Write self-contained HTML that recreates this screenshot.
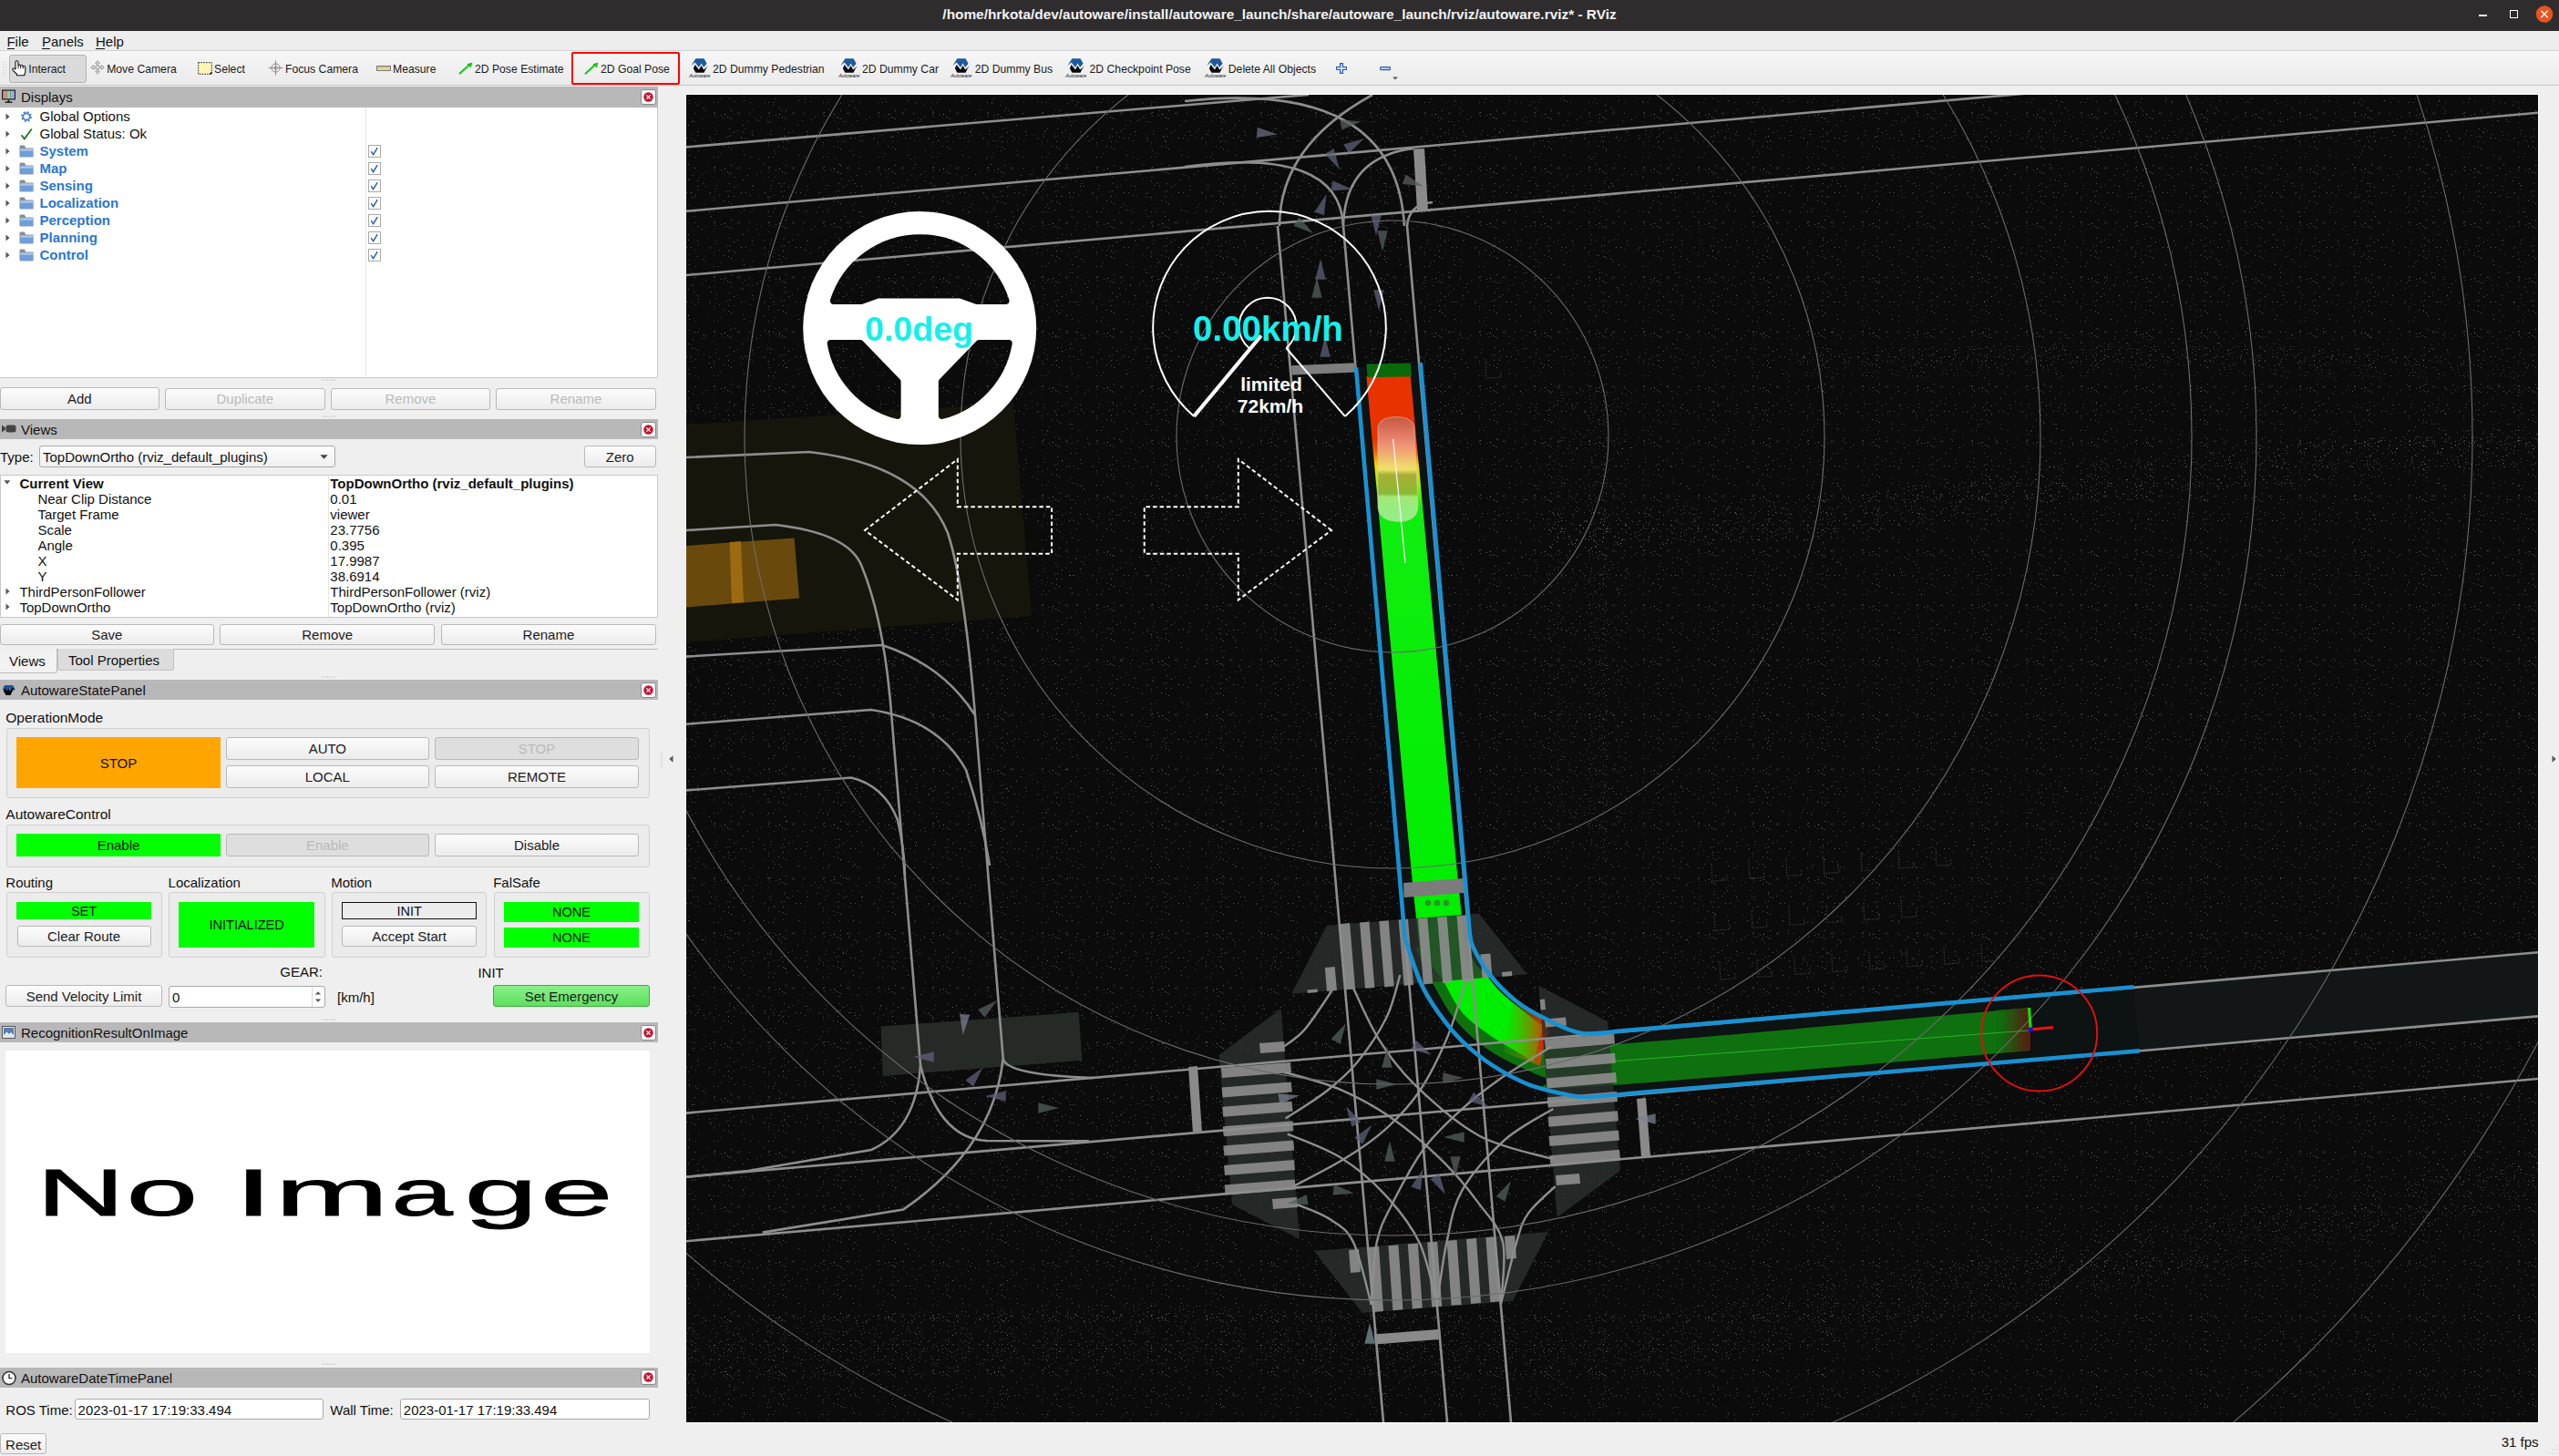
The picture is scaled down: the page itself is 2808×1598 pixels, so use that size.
<!DOCTYPE html>
<html><head><meta charset="utf-8"><title>RViz</title>
<style>
html,body{margin:0;padding:0;}
body{width:2808px;height:1598px;position:relative;overflow:hidden;background:#efefef;font-family:"Liberation Sans",sans-serif;}
body>div{position:absolute;}
.t{position:absolute;white-space:nowrap;}
</style></head><body>
<div style="left:752px;top:103px;width:2034px;height:1459px;background:#fff;"></div>
<svg style="position:absolute;left:753px;top:104px" width="2032" height="1457" viewBox="753 104 2032 1457"><rect x="753" y="104" width="2032" height="1457" fill="#0b0b0b"/><defs><pattern id="pc" width="60" height="60" patternUnits="userSpaceOnUse"><rect x="20" y="9" width="1" height="1" fill="#a8a8a8" fill-opacity="0.37"/><rect x="3" y="4" width="1" height="1" fill="#a8a8a8" fill-opacity="0.50"/><rect x="6" y="23" width="1" height="1" fill="#a8a8a8" fill-opacity="0.42"/><rect x="58" y="32" width="1" height="1" fill="#a8a8a8" fill-opacity="0.31"/><rect x="5" y="27" width="1" height="1" fill="#a8a8a8" fill-opacity="0.38"/><rect x="15" y="5" width="1" height="1" fill="#a8a8a8" fill-opacity="0.42"/><rect x="3" y="52" width="1" height="1" fill="#a8a8a8" fill-opacity="0.42"/><rect x="14" y="40" width="1" height="1" fill="#a8a8a8" fill-opacity="0.44"/><rect x="3" y="36" width="1" height="1" fill="#a8a8a8" fill-opacity="0.43"/><rect x="3" y="14" width="1" height="1" fill="#a8a8a8" fill-opacity="0.26"/><rect x="54" y="8" width="1" height="1" fill="#a8a8a8" fill-opacity="0.34"/><rect x="9" y="34" width="1" height="1" fill="#a8a8a8" fill-opacity="0.29"/><rect x="19" y="35" width="1" height="1" fill="#a8a8a8" fill-opacity="0.49"/><rect x="11" y="6" width="1" height="1" fill="#a8a8a8" fill-opacity="0.42"/><rect x="40" y="12" width="1" height="1" fill="#a8a8a8" fill-opacity="0.36"/><rect x="35" y="45" width="1" height="1" fill="#a8a8a8" fill-opacity="0.27"/><rect x="3" y="39" width="1" height="1" fill="#a8a8a8" fill-opacity="0.31"/><rect x="43" y="34" width="1" height="1" fill="#a8a8a8" fill-opacity="0.38"/><rect x="20" y="29" width="1" height="1" fill="#a8a8a8" fill-opacity="0.43"/><rect x="29" y="23" width="1" height="1" fill="#a8a8a8" fill-opacity="0.34"/><rect x="50" y="11" width="1" height="1" fill="#a8a8a8" fill-opacity="0.46"/><rect x="15" y="5" width="1" height="1" fill="#a8a8a8" fill-opacity="0.42"/><rect x="33" y="31" width="1" height="1" fill="#a8a8a8" fill-opacity="0.51"/><rect x="46" y="28" width="1" height="1" fill="#a8a8a8" fill-opacity="0.34"/><rect x="4" y="7" width="1" height="1" fill="#a8a8a8" fill-opacity="0.40"/><rect x="10" y="48" width="1" height="1" fill="#a8a8a8" fill-opacity="0.35"/><rect x="59" y="31" width="1" height="1" fill="#a8a8a8" fill-opacity="0.38"/><rect x="42" y="4" width="1" height="1" fill="#a8a8a8" fill-opacity="0.48"/><rect x="36" y="50" width="1" height="1" fill="#a8a8a8" fill-opacity="0.51"/><rect x="20" y="21" width="1" height="1" fill="#a8a8a8" fill-opacity="0.46"/><rect x="38" y="31" width="1" height="1" fill="#a8a8a8" fill-opacity="0.42"/><rect x="29" y="4" width="1" height="1" fill="#a8a8a8" fill-opacity="0.50"/><rect x="17" y="30" width="1" height="1" fill="#a8a8a8" fill-opacity="0.46"/><rect x="4" y="3" width="1" height="1" fill="#a8a8a8" fill-opacity="0.47"/><rect x="19" y="41" width="1" height="1" fill="#a8a8a8" fill-opacity="0.42"/><rect x="43" y="52" width="1" height="1" fill="#a8a8a8" fill-opacity="0.38"/><rect x="45" y="24" width="1" height="1" fill="#a8a8a8" fill-opacity="0.52"/><rect x="22" y="1" width="1" height="1" fill="#a8a8a8" fill-opacity="0.53"/><rect x="22" y="10" width="1" height="1" fill="#a8a8a8" fill-opacity="0.43"/><rect x="31" y="3" width="1" height="1" fill="#a8a8a8" fill-opacity="0.32"/><rect x="18" y="8" width="1" height="1" fill="#a8a8a8" fill-opacity="0.47"/><rect x="25" y="25" width="1" height="1" fill="#a8a8a8" fill-opacity="0.53"/><rect x="31" y="5" width="1" height="1" fill="#a8a8a8" fill-opacity="0.30"/><rect x="25" y="35" width="1" height="1" fill="#a8a8a8" fill-opacity="0.33"/><rect x="8" y="52" width="1" height="1" fill="#a8a8a8" fill-opacity="0.38"/><rect x="35" y="17" width="1" height="1" fill="#a8a8a8" fill-opacity="0.46"/><rect x="22" y="43" width="1" height="1" fill="#a8a8a8" fill-opacity="0.52"/><rect x="14" y="9" width="1" height="1" fill="#a8a8a8" fill-opacity="0.27"/></pattern><pattern id="pc2" width="83" height="83" patternUnits="userSpaceOnUse"><rect x="15" y="71" width="1" height="1" fill="#a8a8a8" fill-opacity="0.22"/><rect x="66" y="67" width="1" height="1" fill="#a8a8a8" fill-opacity="0.37"/><rect x="13" y="71" width="1" height="1" fill="#a8a8a8" fill-opacity="0.22"/><rect x="24" y="35" width="1" height="1" fill="#a8a8a8" fill-opacity="0.21"/><rect x="12" y="64" width="1" height="1" fill="#a8a8a8" fill-opacity="0.34"/><rect x="3" y="8" width="1" height="1" fill="#a8a8a8" fill-opacity="0.33"/><rect x="78" y="64" width="1" height="1" fill="#a8a8a8" fill-opacity="0.38"/><rect x="25" y="35" width="1" height="1" fill="#a8a8a8" fill-opacity="0.34"/><rect x="68" y="61" width="1" height="1" fill="#a8a8a8" fill-opacity="0.35"/><rect x="31" y="66" width="1" height="1" fill="#a8a8a8" fill-opacity="0.46"/><rect x="33" y="71" width="1" height="1" fill="#a8a8a8" fill-opacity="0.47"/><rect x="25" y="57" width="1" height="1" fill="#a8a8a8" fill-opacity="0.24"/><rect x="15" y="50" width="1" height="1" fill="#a8a8a8" fill-opacity="0.33"/><rect x="9" y="30" width="1" height="1" fill="#a8a8a8" fill-opacity="0.33"/><rect x="27" y="38" width="1" height="1" fill="#a8a8a8" fill-opacity="0.44"/><rect x="19" y="82" width="1" height="1" fill="#a8a8a8" fill-opacity="0.40"/><rect x="18" y="32" width="1" height="1" fill="#a8a8a8" fill-opacity="0.46"/><rect x="59" y="28" width="1" height="1" fill="#a8a8a8" fill-opacity="0.42"/><rect x="12" y="50" width="1" height="1" fill="#a8a8a8" fill-opacity="0.47"/><rect x="20" y="28" width="1" height="1" fill="#a8a8a8" fill-opacity="0.25"/><rect x="55" y="65" width="1" height="1" fill="#a8a8a8" fill-opacity="0.32"/><rect x="53" y="25" width="1" height="1" fill="#a8a8a8" fill-opacity="0.31"/><rect x="11" y="46" width="1" height="1" fill="#a8a8a8" fill-opacity="0.21"/><rect x="70" y="58" width="1" height="1" fill="#a8a8a8" fill-opacity="0.33"/><rect x="2" y="49" width="1" height="1" fill="#a8a8a8" fill-opacity="0.30"/><rect x="79" y="37" width="1" height="1" fill="#a8a8a8" fill-opacity="0.35"/><rect x="8" y="14" width="1" height="1" fill="#a8a8a8" fill-opacity="0.50"/><rect x="29" y="13" width="1" height="1" fill="#a8a8a8" fill-opacity="0.23"/></pattern><pattern id="pc3" width="50" height="50" patternUnits="userSpaceOnUse"><rect x="9" y="14" width="1" height="1" fill="#b0b0b0" fill-opacity="0.40"/><rect x="0" y="31" width="1" height="1" fill="#b0b0b0" fill-opacity="0.45"/><rect x="11" y="16" width="1" height="1" fill="#b0b0b0" fill-opacity="0.28"/><rect x="9" y="26" width="1" height="1" fill="#b0b0b0" fill-opacity="0.36"/><rect x="39" y="36" width="1" height="1" fill="#b0b0b0" fill-opacity="0.30"/><rect x="8" y="44" width="1" height="1" fill="#b0b0b0" fill-opacity="0.46"/><rect x="39" y="41" width="1" height="1" fill="#b0b0b0" fill-opacity="0.40"/><rect x="3" y="29" width="1" height="1" fill="#b0b0b0" fill-opacity="0.47"/><rect x="49" y="43" width="1" height="1" fill="#b0b0b0" fill-opacity="0.44"/><rect x="25" y="25" width="1" height="1" fill="#b0b0b0" fill-opacity="0.32"/><rect x="6" y="30" width="1" height="1" fill="#b0b0b0" fill-opacity="0.39"/><rect x="3" y="12" width="1" height="1" fill="#b0b0b0" fill-opacity="0.22"/><rect x="13" y="28" width="1" height="1" fill="#b0b0b0" fill-opacity="0.25"/><rect x="21" y="38" width="1" height="1" fill="#b0b0b0" fill-opacity="0.22"/><rect x="0" y="36" width="1" height="1" fill="#b0b0b0" fill-opacity="0.25"/><rect x="6" y="23" width="1" height="1" fill="#b0b0b0" fill-opacity="0.38"/><rect x="4" y="13" width="1" height="1" fill="#b0b0b0" fill-opacity="0.38"/><rect x="9" y="40" width="1" height="1" fill="#b0b0b0" fill-opacity="0.28"/><rect x="22" y="38" width="1" height="1" fill="#b0b0b0" fill-opacity="0.31"/><rect x="7" y="7" width="1" height="1" fill="#b0b0b0" fill-opacity="0.45"/><rect x="29" y="30" width="1" height="1" fill="#b0b0b0" fill-opacity="0.35"/><rect x="5" y="9" width="1" height="1" fill="#b0b0b0" fill-opacity="0.23"/><rect x="21" y="47" width="1" height="1" fill="#b0b0b0" fill-opacity="0.28"/><rect x="44" y="10" width="1" height="1" fill="#b0b0b0" fill-opacity="0.35"/><rect x="13" y="33" width="1" height="1" fill="#b0b0b0" fill-opacity="0.31"/><rect x="44" y="34" width="1" height="1" fill="#b0b0b0" fill-opacity="0.47"/><rect x="48" y="33" width="1" height="1" fill="#b0b0b0" fill-opacity="0.29"/><rect x="41" y="5" width="1" height="1" fill="#b0b0b0" fill-opacity="0.41"/><rect x="16" y="33" width="1" height="1" fill="#b0b0b0" fill-opacity="0.31"/><rect x="10" y="22" width="1" height="1" fill="#b0b0b0" fill-opacity="0.43"/><rect x="34" y="34" width="1" height="1" fill="#b0b0b0" fill-opacity="0.43"/><rect x="21" y="40" width="1" height="1" fill="#b0b0b0" fill-opacity="0.27"/><rect x="48" y="12" width="1" height="1" fill="#b0b0b0" fill-opacity="0.44"/><rect x="25" y="47" width="1" height="1" fill="#b0b0b0" fill-opacity="0.44"/><rect x="12" y="33" width="1" height="1" fill="#b0b0b0" fill-opacity="0.35"/><rect x="46" y="1" width="1" height="1" fill="#b0b0b0" fill-opacity="0.50"/><rect x="17" y="30" width="1" height="1" fill="#b0b0b0" fill-opacity="0.28"/><rect x="44" y="38" width="1" height="1" fill="#b0b0b0" fill-opacity="0.49"/><rect x="28" y="46" width="1" height="1" fill="#b0b0b0" fill-opacity="0.50"/><rect x="23" y="5" width="1" height="1" fill="#b0b0b0" fill-opacity="0.27"/><rect x="14" y="30" width="1" height="1" fill="#b0b0b0" fill-opacity="0.26"/><rect x="13" y="30" width="1" height="1" fill="#b0b0b0" fill-opacity="0.39"/><rect x="39" y="0" width="1" height="1" fill="#b0b0b0" fill-opacity="0.34"/><rect x="41" y="22" width="1" height="1" fill="#b0b0b0" fill-opacity="0.44"/><rect x="5" y="42" width="1" height="1" fill="#b0b0b0" fill-opacity="0.24"/><rect x="24" y="45" width="1" height="1" fill="#b0b0b0" fill-opacity="0.43"/><rect x="30" y="11" width="1" height="1" fill="#b0b0b0" fill-opacity="0.33"/><rect x="40" y="21" width="1" height="1" fill="#b0b0b0" fill-opacity="0.23"/><rect x="46" y="25" width="1" height="1" fill="#b0b0b0" fill-opacity="0.34"/><rect x="47" y="5" width="1" height="1" fill="#b0b0b0" fill-opacity="0.42"/><rect x="10" y="8" width="1" height="1" fill="#b0b0b0" fill-opacity="0.21"/><rect x="37" y="29" width="1" height="1" fill="#b0b0b0" fill-opacity="0.44"/><rect x="9" y="39" width="1" height="1" fill="#b0b0b0" fill-opacity="0.45"/><rect x="30" y="42" width="1" height="1" fill="#b0b0b0" fill-opacity="0.48"/><rect x="9" y="35" width="1" height="1" fill="#b0b0b0" fill-opacity="0.36"/><rect x="1" y="0" width="1" height="1" fill="#b0b0b0" fill-opacity="0.44"/><rect x="46" y="41" width="1" height="1" fill="#b0b0b0" fill-opacity="0.23"/><rect x="47" y="8" width="1" height="1" fill="#b0b0b0" fill-opacity="0.33"/><rect x="12" y="13" width="1" height="1" fill="#b0b0b0" fill-opacity="0.21"/><rect x="13" y="18" width="1" height="1" fill="#b0b0b0" fill-opacity="0.35"/><rect x="48" y="37" width="1" height="1" fill="#b0b0b0" fill-opacity="0.30"/><rect x="34" y="26" width="1" height="1" fill="#b0b0b0" fill-opacity="0.45"/><rect x="3" y="47" width="1" height="1" fill="#b0b0b0" fill-opacity="0.31"/><rect x="29" y="42" width="1" height="1" fill="#b0b0b0" fill-opacity="0.38"/><rect x="33" y="26" width="1" height="1" fill="#b0b0b0" fill-opacity="0.45"/><rect x="32" y="8" width="1" height="1" fill="#b0b0b0" fill-opacity="0.36"/><rect x="33" y="32" width="1" height="1" fill="#b0b0b0" fill-opacity="0.21"/><rect x="28" y="49" width="1" height="1" fill="#b0b0b0" fill-opacity="0.25"/><rect x="0" y="49" width="1" height="1" fill="#b0b0b0" fill-opacity="0.44"/><rect x="11" y="9" width="1" height="1" fill="#b0b0b0" fill-opacity="0.34"/></pattern><linearGradient id="bandN" x1="0" y1="399" x2="0" y2="1000" gradientUnits="userSpaceOnUse"><stop offset="0" stop-color="#e83300"/><stop offset="0.139" stop-color="#e83300"/><stop offset="0.16" stop-color="#f06000"/><stop offset="0.188" stop-color="#f0e000"/><stop offset="0.22" stop-color="#a0f000"/><stop offset="0.262" stop-color="#10ee10"/><stop offset="1" stop-color="#00ee00"/></linearGradient><linearGradient id="carG" x1="0" y1="458" x2="0" y2="573" gradientUnits="userSpaceOnUse"><stop offset="0" stop-color="#c06050"/><stop offset="0.25" stop-color="#f0a090"/><stop offset="0.5" stop-color="#f0e080"/><stop offset="0.55" stop-color="#a0a040"/><stop offset="0.73" stop-color="#90b040"/><stop offset="0.76" stop-color="#b8e890"/><stop offset="1" stop-color="#b0f0a0"/></linearGradient><linearGradient id="endRed" x1="1640" y1="0" x2="1700" y2="0" gradientUnits="userSpaceOnUse"><stop offset="0" stop-color="#00ee00" stop-opacity="0"/><stop offset="1" stop-color="#ff2000"/></linearGradient><linearGradient id="goalRed" x1="2195" y1="0" x2="2228" y2="0" gradientUnits="userSpaceOnUse"><stop offset="0" stop-color="#0e6e0e"/><stop offset="1" stop-color="#5a1a10"/></linearGradient></defs><rect x="753" y="104" width="2032" height="1457" fill="url(#pc)"/><rect x="753" y="104" width="2032" height="1457" fill="url(#pc2)"/><polygon points="1700.0,560.0 2000.0,548.0 2250.0,510.0 2785.0,466.0 2785.0,510.0 2250.0,552.0 2000.0,592.0 1700.0,606.0" fill="url(#pc3)"/><polygon points="1960.0,388.0 2400.0,370.0 2785.0,404.0 2785.0,436.0 2400.0,405.0 1960.0,420.0" fill="url(#pc3)" fill-opacity="0.7"/><polygon points="753.0,1450.0 1250.0,1430.0 1750.0,1450.0 2300.0,1360.0 2785.0,1270.0 2785.0,1320.0 2300.0,1420.0 1750.0,1520.0 1250.0,1500.0 753.0,1520.0" fill="url(#pc3)" fill-opacity="0.8"/><polygon points="1700.0,420.0 1790.0,420.0 1790.0,930.0 1700.0,930.0" fill="url(#pc3)" fill-opacity="0.6"/><polygon points="753.0,466.0 1112.0,442.0 1132.0,676.0 753.0,705.0" fill="#16150b"/><polygon points="753.0,599.0 871.5,590.4 877.0,656.6 753.0,666.5" fill="#6a4a0c"/><polygon points="800.6,595.0 813.0,594.0 816.0,661.0 803.0,662.0" fill="#9c6a10"/><polygon points="966.6,1126.4 1183.6,1111.0 1187.5,1163.8 968.6,1181.0" fill="#262a27"/><polygon points="1700.0,1141.5 2785.0,1045.3 2785.0,1115.4 1700.0,1209.0" fill="#121616"/><path d="M1488,403.4 L1541.6,1029.8 C1544.5,1038.0 1553.0,1065.5 1559.2,1079.2 C1565.4,1092.9 1571.3,1101.4 1578.7,1111.8 C1586.1,1122.2 1593.8,1132.2 1603.6,1141.8 C1613.4,1151.4 1625.3,1161.2 1637.5,1169.2 C1649.7,1177.2 1663.7,1184.9 1676.7,1190.1 C1689.8,1195.3 1704.9,1198.3 1715.8,1200.6 C1726.7,1202.9 1728.0,1204.3 1742.0,1204.0 C1756.0,1203.7 1790.3,1199.8 1800.0,1199.0 L2347.7,1153.4 L2341.6,1083.3 L1780.0,1131.4 C1772.6,1131.8 1749.4,1136.2 1735.4,1134.0 C1721.4,1131.8 1708.2,1124.2 1696.2,1118.3 C1684.2,1112.4 1673.8,1106.8 1663.6,1098.7 C1653.4,1090.7 1642.7,1079.8 1634.9,1070.0 C1627.1,1060.2 1620.3,1047.7 1616.6,1040.0 C1612.9,1032.3 1613.3,1026.3 1612.7,1023.6 L1558.7,398 Z" fill="#0d1212"/><polygon points="2341.6,1083.3 2785.0,1045.3 2785.0,1115.4 2347.7,1153.4" fill="#121616"/><path d="M1600.0,1040.0 C1602.0,1045.8 1605.3,1063.3 1612.0,1075.0 C1618.7,1086.7 1628.7,1099.2 1640.0,1110.0 C1651.3,1120.8 1666.7,1133.3 1680.0,1140.0 C1693.3,1146.7 1628.7,1155.7 1720.0,1150.0 C1811.3,1144.3 2143.3,1113.3 2228.0,1106.0 L2228.0,1153.0 C2146.7,1159.7 1828.4,1187.9 1740.0,1193.0 C1651.6,1198.1 1714.6,1189.9 1697.5,1183.6 C1680.4,1177.2 1654.0,1165.3 1637.5,1154.9 C1621.0,1144.5 1609.2,1133.7 1598.3,1121.0 C1587.4,1108.3 1579.5,1092.5 1572.0,1079.0 C1564.5,1065.5 1556.2,1046.5 1553.0,1040.0 Z" fill="#0f700f"/><polygon points="2190.0,1109.0 2228.0,1106.0 2228.0,1153.0 2190.0,1156.0" fill="url(#goalRed)"/><path d="M1700,1170 L2226,1131" stroke="#30d030" stroke-width="1" stroke-opacity="0.7"/><path d="M1499.4,413.0 C1508.4,510.8 1542.1,893.8 1553.2,1000.0 C1564.3,1106.2 1561.1,1037.5 1566.0,1050.0 C1570.9,1062.5 1576.2,1064.7 1582.7,1075.0 C1589.2,1085.3 1595.8,1101.3 1604.9,1111.8 C1614.0,1122.3 1626.7,1130.3 1637.5,1137.9 C1648.3,1145.5 1662.4,1152.7 1670.0,1157.5 C1677.6,1162.3 1681.0,1165.1 1683.2,1166.6 L1693.6,1123.5 C1692.9,1123.5 1696.9,1128.7 1689.7,1123.5 C1682.5,1118.3 1659.8,1100.5 1650.5,1092.2 C1641.2,1083.9 1639.5,1080.6 1633.6,1073.6 C1627.7,1066.6 1620.0,1062.3 1615.0,1050.0 C1610.0,1037.7 1614.6,1106.2 1603.4,1000.0 C1592.2,893.8 1557.1,510.8 1547.8,413.0 Z" fill="url(#bandN)"/><path d="M1660,1100 L1700,1120 L1690,1170 L1650,1155 Z" fill="url(#endRed)"/><polygon points="1701.5,1130.0 1689.7,1149.7 1683.2,1166.6 1694.0,1135.0" fill="#f02010"/><polygon points="1499.4,399.5 1547.8,398.5 1549.0,413.3 1500.6,414.3" fill="#0a6a0a"/><polygon points="1417.1,1090.7 1456.0,1015.7 1622.8,1002.6 1675.9,1069.3" fill="#2b302d" fill-opacity="0.8"/><polygon points="1337.5,1158.0 1405.6,1107.0 1426.0,1360.0 1352.0,1322.0" fill="#2b302d" fill-opacity="0.8"/><polygon points="1688.4,1081.8 1764.0,1121.0 1778.0,1285.0 1708.5,1336.0" fill="#2b302d" fill-opacity="0.8"/><polygon points="1442.0,1373.0 1698.8,1352.0 1660.0,1428.0 1494.8,1441.0" fill="#2b302d" fill-opacity="0.8"/><polygon points="1470.7,1014.0 1481.1,1013.1 1487.1,1085.4 1476.7,1086.3" fill="#8f8f8f" fill-opacity="0.88"/><polygon points="1492.0,1012.5 1502.4,1011.6 1508.4,1083.9 1498.0,1084.8" fill="#8f8f8f" fill-opacity="0.88"/><polygon points="1513.3,1011.1 1523.7,1010.2 1529.7,1082.5 1519.3,1083.4" fill="#8f8f8f" fill-opacity="0.88"/><polygon points="1534.6,1009.6 1545.0,1008.8 1551.0,1081.0 1540.6,1082.0" fill="#8f8f8f" fill-opacity="0.88"/><polygon points="1555.9,1008.2 1566.3,1007.3 1572.3,1079.6 1561.9,1080.5" fill="#8f8f8f" fill-opacity="0.88"/><polygon points="1577.2,1006.8 1587.6,1005.9 1593.6,1078.1 1583.2,1079.0" fill="#8f8f8f" fill-opacity="0.88"/><polygon points="1598.5,1005.3 1608.9,1004.4 1614.9,1076.7 1604.5,1077.6" fill="#8f8f8f" fill-opacity="0.88"/><polygon points="1453.8,1062.0 1464.7,1061.0 1467.0,1087.0 1456.0,1088.0" fill="#8f8f8f" fill-opacity="0.88"/><polygon points="1624.4,1047.5 1635.4,1046.5 1637.5,1072.5 1626.5,1073.5" fill="#8f8f8f" fill-opacity="0.88"/><polygon points="1434.6,1086.5 1445.6,1085.6 1445.8,1089.0 1434.8,1089.9" fill="#8f8f8f" fill-opacity="0.88"/><polygon points="1648.0,1067.0 1659.0,1066.0 1659.3,1071.0 1648.3,1072.0" fill="#8f8f8f" fill-opacity="0.88"/><polygon points="1340.0,1172.0 1416.0,1166.0 1417.0,1177.0 1341.0,1183.0" fill="#8f8f8f" fill-opacity="0.88"/><polygon points="1340.6,1193.4 1416.8,1187.4 1417.8,1198.4 1341.6,1204.4" fill="#8f8f8f" fill-opacity="0.88"/><polygon points="1341.2,1214.8 1417.6,1208.8 1418.6,1219.8 1342.2,1225.8" fill="#8f8f8f" fill-opacity="0.88"/><polygon points="1341.8,1236.2 1418.4,1230.2 1419.4,1241.2 1342.8,1247.2" fill="#8f8f8f" fill-opacity="0.88"/><polygon points="1342.4,1257.6 1419.2,1251.6 1420.2,1262.6 1343.4,1268.6" fill="#8f8f8f" fill-opacity="0.88"/><polygon points="1343.0,1279.0 1420.0,1273.0 1421.0,1284.0 1344.0,1290.0" fill="#8f8f8f" fill-opacity="0.88"/><polygon points="1343.6,1300.4 1420.8,1294.4 1421.8,1305.4 1344.6,1311.4" fill="#8f8f8f" fill-opacity="0.88"/><polygon points="1382.0,1145.0 1409.0,1143.0 1410.0,1154.0 1383.0,1156.0" fill="#8f8f8f" fill-opacity="0.88"/><polygon points="1396.0,1316.0 1423.0,1314.0 1424.0,1325.0 1397.0,1327.0" fill="#8f8f8f" fill-opacity="0.88"/><polygon points="1695.0,1141.0 1771.0,1134.5 1772.0,1145.5 1696.0,1152.0" fill="#8f8f8f" fill-opacity="0.88"/><polygon points="1695.9,1162.2 1772.0,1155.7 1773.0,1166.7 1696.9,1173.2" fill="#8f8f8f" fill-opacity="0.88"/><polygon points="1696.8,1183.4 1773.0,1176.9 1774.0,1187.9 1697.8,1194.4" fill="#8f8f8f" fill-opacity="0.88"/><polygon points="1697.7,1204.6 1774.0,1198.1 1775.0,1209.1 1698.7,1215.6" fill="#8f8f8f" fill-opacity="0.88"/><polygon points="1698.6,1225.8 1775.0,1219.3 1776.0,1230.3 1699.6,1236.8" fill="#8f8f8f" fill-opacity="0.88"/><polygon points="1699.5,1247.0 1776.0,1240.5 1777.0,1251.5 1700.5,1258.0" fill="#8f8f8f" fill-opacity="0.88"/><polygon points="1700.4,1268.2 1777.0,1261.7 1778.0,1272.7 1701.4,1279.2" fill="#8f8f8f" fill-opacity="0.88"/><polygon points="1695.0,1118.5 1718.0,1116.5 1719.0,1125.5 1696.0,1127.5" fill="#8f8f8f" fill-opacity="0.88"/><polygon points="1689.7,1097.0 1695.0,1096.5 1696.0,1108.0 1690.7,1108.5" fill="#8f8f8f" fill-opacity="0.88"/><polygon points="1707.0,1290.0 1733.0,1288.0 1734.0,1299.0 1708.0,1301.0" fill="#8f8f8f" fill-opacity="0.88"/><polygon points="1502.0,1369.0 1513.0,1368.1 1518.0,1439.1 1507.0,1440.0" fill="#8f8f8f" fill-opacity="0.88"/><polygon points="1523.4,1367.2 1534.4,1366.3 1539.4,1437.3 1528.4,1438.2" fill="#8f8f8f" fill-opacity="0.88"/><polygon points="1544.8,1365.4 1555.8,1364.5 1560.8,1435.5 1549.8,1436.4" fill="#8f8f8f" fill-opacity="0.88"/><polygon points="1566.2,1363.6 1577.2,1362.7 1582.2,1433.7 1571.2,1434.6" fill="#8f8f8f" fill-opacity="0.88"/><polygon points="1587.6,1361.8 1598.6,1360.9 1603.6,1431.9 1592.6,1432.8" fill="#8f8f8f" fill-opacity="0.88"/><polygon points="1609.0,1360.0 1620.0,1359.1 1625.0,1430.1 1614.0,1431.0" fill="#8f8f8f" fill-opacity="0.88"/><polygon points="1630.4,1358.2 1641.4,1357.3 1646.4,1428.3 1635.4,1429.2" fill="#8f8f8f" fill-opacity="0.88"/><polygon points="1480.0,1372.0 1491.0,1371.0 1493.0,1396.0 1482.0,1397.0" fill="#8f8f8f" fill-opacity="0.88"/><polygon points="1651.0,1357.0 1662.0,1356.0 1664.0,1381.0 1653.0,1382.0" fill="#8f8f8f" fill-opacity="0.88"/><polyline points="753.0,161.4 1436.0,104.0" fill="none" stroke="#8e8e8e" stroke-width="2.6" stroke-linejoin="round"/><polyline points="753.0,231.8 2253.0,100.0" fill="none" stroke="#8e8e8e" stroke-width="2.6" stroke-linejoin="round"/><polyline points="753.0,302.0 2785.0,123.7" fill="none" stroke="#8e8e8e" stroke-width="2.6" stroke-linejoin="round"/><polyline points="753.0,1221.6 2785.0,1045.3" fill="none" stroke="#8e8e8e" stroke-width="2.6" stroke-linejoin="round"/><polyline points="753.0,1291.7 2785.0,1115.4" fill="none" stroke="#8e8e8e" stroke-width="2.6" stroke-linejoin="round"/><polyline points="753.0,1362.2 2785.0,1184.0" fill="none" stroke="#8e8e8e" stroke-width="2.6" stroke-linejoin="round"/><polyline points="1402.0,248.0 1518.0,1561.0" fill="none" stroke="#8e8e8e" stroke-width="2.6" stroke-linejoin="round"/><polyline points="1474.0,248.0 1588.0,1561.0" fill="none" stroke="#8e8e8e" stroke-width="2.6" stroke-linejoin="round"/><polyline points="1544.0,248.0 1658.0,1561.0" fill="none" stroke="#8e8e8e" stroke-width="2.6" stroke-linejoin="round"/><path d="M1300,111 Q1532,86 1541,248" fill="none" stroke="#8e8e8e" stroke-width="2.6"/><path d="M1506,104 Q1404,160 1404,248" fill="none" stroke="#8e8e8e" stroke-width="2.6"/><path d="M1300,183 Q1470,160 1474,248" fill="none" stroke="#8e8e8e" stroke-width="2.6"/><path d="M1551,163 Q1476,172 1474,248" fill="none" stroke="#8e8e8e" stroke-width="2.6"/><path d="M1544,248 Q1546,224 1572,222" fill="none" stroke="#8e8e8e" stroke-width="2.6"/><polygon points="1551.0,163.5 1563.0,163.0 1567.0,231.0 1555.0,231.5" fill="#8a8a8a"/><path d="M753,582 L851,576 Q930,585 945,620 Q970,680 978,782 L1010,1169 Q1005,1240 956,1262 L821,1285 L753,1291.7" fill="none" stroke="#8e8e8e" stroke-width="2.6"/><path d="M753,502 L888,496 Q1010,510 1040,585 Q1058,640 1070,785 L1100.7,1161.8 Q1104,1180 1200,1183" fill="none" stroke="#8e8e8e" stroke-width="2.6"/><path d="M753,720.6 L968,708 Q1035,730 1070,785" fill="none" stroke="#8e8e8e" stroke-width="2.6"/><path d="M753,794.7 L956,779 Q1030,790 1060,845 Q1078,900 1086,950" fill="none" stroke="#8e8e8e" stroke-width="2.6"/><path d="M753,867.4 L934,853.5 Q970,862 985,900 Q992,930 993,960" fill="none" stroke="#8e8e8e" stroke-width="2.6"/><path d="M1010,1169 Q1030,1250 1083,1252 L1195,1252.4" fill="none" stroke="#8e8e8e" stroke-width="2.6"/><path d="M1100.7,1161.8 Q1090,1260 991,1327.6 L836.8,1352.6" fill="none" stroke="#8e8e8e" stroke-width="2.6"/><path d="M1461.7,1087.0 C1456.8,1094.1 1440.8,1119.3 1431.9,1129.6 C1423.1,1139.9 1412.4,1145.6 1408.5,1148.8" fill="none" stroke="#8e8e8e" stroke-width="2.4"/><path d="M1485.2,1084.9 C1489.8,1094.1 1501.5,1122.5 1512.8,1140.3 C1524.2,1158.0 1534.8,1173.6 1553.3,1191.4 C1571.7,1209.1 1598.4,1233.2 1623.5,1246.7 C1648.7,1260.2 1691.0,1268.0 1704.4,1272.3" fill="none" stroke="#8e8e8e" stroke-width="2.4"/><path d="M1536.3,1070.0 C1533.8,1077.8 1529.2,1100.9 1521.4,1116.8 C1513.5,1132.8 1500.4,1152.3 1489.4,1165.8 C1478.4,1179.3 1468.5,1187.5 1455.4,1197.7 C1442.2,1208.0 1418.1,1222.6 1410.6,1227.5" fill="none" stroke="#8e8e8e" stroke-width="2.4"/><path d="M1608.6,1076.4 C1605.1,1087.0 1595.9,1120.0 1587.4,1140.3 C1578.8,1160.5 1568.9,1181.1 1557.5,1197.7 C1546.2,1214.4 1533.1,1227.9 1519.2,1240.3 C1505.4,1252.7 1491.2,1262.0 1474.5,1272.3 C1457.8,1282.5 1428.4,1297.1 1419.2,1302.1" fill="none" stroke="#8e8e8e" stroke-width="2.4"/><path d="M1408.5,1176.5 C1418.8,1179.6 1450.4,1187.1 1470.3,1195.6 C1490.1,1204.1 1508.9,1214.4 1527.7,1227.5 C1546.5,1240.7 1567.5,1259.1 1583.1,1274.4 C1598.7,1289.6 1610.4,1304.2 1621.4,1319.1 C1632.4,1334.0 1644.9,1345.0 1649.1,1363.8 C1653.3,1382.6 1647.2,1420.6 1646.8,1432.0" fill="none" stroke="#8e8e8e" stroke-width="2.4"/><path d="M1412.8,1244.6 C1422.4,1248.8 1452.5,1259.1 1470.3,1270.1 C1488.0,1281.1 1504.7,1295.0 1519.2,1310.6 C1533.8,1326.2 1548.0,1343.6 1557.5,1363.8 C1567.1,1384.0 1573.6,1420.6 1576.8,1432.0" fill="none" stroke="#8e8e8e" stroke-width="2.4"/><path d="M1421.3,1321.2 C1427.7,1324.1 1449.0,1331.2 1459.6,1338.3 C1470.3,1345.4 1477.6,1348.2 1485.2,1363.8 C1492.7,1379.4 1501.5,1420.6 1504.8,1432.0" fill="none" stroke="#8e8e8e" stroke-width="2.4"/><path d="M1504.8,1432.0 C1505.8,1420.6 1506.9,1382.3 1510.7,1363.8 C1514.5,1345.3 1519.2,1338.3 1527.7,1321.2 C1536.3,1304.2 1549.4,1278.6 1561.8,1261.6 C1574.2,1244.6 1588.4,1231.8 1602.3,1219.0 C1616.1,1206.3 1628.2,1196.7 1644.8,1185.0 C1661.5,1173.3 1692.7,1154.8 1702.3,1148.8" fill="none" stroke="#8e8e8e" stroke-width="2.4"/><path d="M1576.8,1432.0 C1578.5,1420.6 1582.8,1384.8 1587.4,1363.8 C1592.0,1342.9 1593.7,1325.1 1604.4,1306.3 C1615.0,1287.5 1634.5,1265.9 1651.2,1251.0 C1667.9,1236.1 1695.6,1222.6 1704.4,1216.9" fill="none" stroke="#8e8e8e" stroke-width="2.4"/><path d="M1646.8,1432.0 C1649.6,1420.6 1659.0,1380.5 1664.0,1363.8 C1669.0,1347.1 1669.7,1342.2 1676.8,1331.9 C1683.9,1321.6 1701.6,1307.0 1706.6,1302.1" fill="none" stroke="#8e8e8e" stroke-width="2.4"/><polygon points="1417.0,401.3 1488.0,398.2 1488.5,408.5 1417.5,411.5" fill="#7e7e7e"/><polygon points="1540.0,969.0 1605.8,964.0 1606.5,980.0 1540.5,985.0" fill="#7c7c7c"/><polygon points="1507.7,1464.5 1578.0,1459.0 1579.0,1470.0 1508.7,1475.5" fill="#8a8a8a"/><polygon points="1304.0,1171.0 1314.0,1170.0 1319.0,1243.0 1309.0,1244.0" fill="#8a8a8a"/><polygon points="1796.0,1206.0 1806.0,1205.0 1811.0,1269.0 1801.0,1270.0" fill="#8a8a8a"/><circle cx="1528" cy="479" r="237" fill="none" stroke="#6c6c6c" stroke-width="1.1"/><circle cx="1528" cy="479" r="474" fill="none" stroke="#6c6c6c" stroke-width="1.1"/><circle cx="1528" cy="479" r="711" fill="none" stroke="#6c6c6c" stroke-width="1.1"/><circle cx="1528" cy="479" r="877" fill="none" stroke="#6c6c6c" stroke-width="1.1"/><circle cx="1528" cy="479" r="948" fill="none" stroke="#6c6c6c" stroke-width="1.1"/><circle cx="1528" cy="479" r="1185" fill="none" stroke="#6c6c6c" stroke-width="1.1"/><circle cx="1528" cy="479" r="1422" fill="none" stroke="#6c6c6c" stroke-width="1.1"/><polygon points="1401.9,147.4 1378.8,151.0 1379.8,139.8" fill="#6a6d7c" fill-opacity="0.75"/><polygon points="1493.8,133.2 1472.3,142.7 1470.4,131.6" fill="#5a5d5d" fill-opacity="0.75"/><polygon points="1496.9,152.0 1480.0,168.3 1474.3,158.5" fill="#5e6178" fill-opacity="0.75"/><polygon points="1470.0,185.9 1453.7,169.0 1463.5,163.3" fill="#5e6178" fill-opacity="0.75"/><polygon points="1483.8,207.8 1460.4,209.4 1462.3,198.3" fill="#5e6178" fill-opacity="0.75"/><polygon points="1455.5,213.0 1453.0,236.3 1442.4,232.4" fill="#5e6178" fill-opacity="0.75"/><polygon points="1441.1,256.2 1419.2,247.8 1425.7,238.5" fill="#53615f" fill-opacity="0.75"/><polygon points="1510.0,259.0 1504.3,236.3 1515.7,236.3" fill="#5e6178" fill-opacity="0.75"/><polygon points="1517.0,276.0 1511.3,253.3 1522.7,253.3" fill="#53615f" fill-opacity="0.75"/><polygon points="1449.0,284.0 1454.7,306.7 1443.3,306.7" fill="#5e6178" fill-opacity="0.75"/><polygon points="1513.0,341.0 1507.3,318.3 1518.7,318.3" fill="#5e6178" fill-opacity="0.75"/><polygon points="1445.0,304.0 1450.7,326.7 1439.3,326.7" fill="#53615f" fill-opacity="0.75"/><polygon points="1454.0,369.0 1459.7,391.7 1448.3,391.7" fill="#5e6178" fill-opacity="0.75"/><polygon points="1562.0,204.5 1538.7,202.0 1542.6,191.4" fill="#5a5d5d" fill-opacity="0.75"/><polygon points="1056.6,1135.9 1053.0,1112.8 1064.2,1113.8" fill="#7a7e90" fill-opacity="0.75"/><polygon points="1094.3,1097.7 1080.5,1116.7 1073.2,1108.0" fill="#55605f" fill-opacity="0.75"/><polygon points="1002.0,1160.0 1024.7,1154.3 1024.7,1165.7" fill="#5e6178" fill-opacity="0.75"/><polygon points="1081.0,1203.0 1103.7,1197.3 1103.7,1208.7" fill="#5e6178" fill-opacity="0.75"/><polygon points="1162.0,1216.0 1139.3,1221.7 1139.3,1210.3" fill="#53615f" fill-opacity="0.75"/><polygon points="1078.3,1171.7 1068.0,1192.8 1059.3,1185.5" fill="#5e6178" fill-opacity="0.75"/><polygon points="1412.2,1320.8 1433.7,1311.3 1435.6,1322.4" fill="#53615f" fill-opacity="0.75"/><polygon points="1425.8,1202.2 1404.3,1211.7 1402.4,1200.6" fill="#7a8090" fill-opacity="0.75"/><polygon points="1794.0,1228.0 1816.7,1222.3 1816.7,1233.7" fill="#7a8090" fill-opacity="0.75"/><polygon points="1503.0,1452.0 1508.7,1474.7 1497.3,1474.7" fill="#7a9098" fill-opacity="0.75"/><polygon points="1477.0,1123.1 1470.5,1145.7 1460.7,1140.0" fill="#53615f" fill-opacity="0.75"/><polygon points="1522.0,1149.0 1527.7,1171.7 1516.3,1171.7" fill="#55605f" fill-opacity="0.75"/><polygon points="1533.0,1190.0 1510.3,1195.7 1510.3,1184.3" fill="#55605f" fill-opacity="0.75"/><polygon points="1606.0,1183.0 1583.3,1188.7 1583.3,1177.3" fill="#5a5d5d" fill-opacity="0.75"/><polygon points="1570.9,1158.0 1548.3,1151.5 1554.0,1141.7" fill="#5e6178" fill-opacity="0.75"/><polygon points="1477.0,1214.1 1493.3,1231.0 1483.5,1236.7" fill="#5e6178" fill-opacity="0.75"/><polygon points="1584.0,1248.0 1606.7,1242.3 1606.7,1253.7" fill="#55605f" fill-opacity="0.75"/><polygon points="1525.0,1252.0 1530.7,1274.7 1519.3,1274.7" fill="#55605f" fill-opacity="0.75"/><polygon points="1597.0,1292.0 1591.3,1269.3 1602.7,1269.3" fill="#55605f" fill-opacity="0.75"/><polygon points="1633.9,1215.0 1611.3,1208.5 1617.0,1198.7" fill="#5e6178" fill-opacity="0.75"/><polygon points="1485.8,1309.8 1462.4,1311.4 1464.3,1300.3" fill="#53615f" fill-opacity="0.75"/><polygon points="1658.0,1296.1 1651.5,1318.7 1641.7,1313.0" fill="#53615f" fill-opacity="0.75"/><polygon points="1586.0,1310.9 1569.7,1294.0 1579.5,1288.3" fill="#5e6178" fill-opacity="0.75"/><polygon points="1561.5,1283.0 1559.0,1306.3 1548.4,1302.4" fill="#5e6178" fill-opacity="0.75"/><polygon points="1505.3,1234.7 1495.0,1255.8 1486.3,1248.5" fill="#5e6178" fill-opacity="0.75"/><path d="M1488,403.4 L1541.6,1029.8 C1544.5,1038.0 1553.0,1065.5 1559.2,1079.2 C1565.4,1092.9 1571.3,1101.4 1578.7,1111.8 C1586.1,1122.2 1593.8,1132.2 1603.6,1141.8 C1613.4,1151.4 1625.3,1161.2 1637.5,1169.2 C1649.7,1177.2 1663.7,1184.9 1676.7,1190.1 C1689.8,1195.3 1704.9,1198.3 1715.8,1200.6 C1726.7,1202.9 1728.0,1204.3 1742.0,1204.0 C1756.0,1203.7 1790.3,1199.8 1800.0,1199.0 L2347.7,1153.4" fill="none" stroke="#1891d2" stroke-width="4.6"/><path d="M1558.7,398 L1612.7,1023.6 C1613.3,1026.3 1612.9,1032.3 1616.6,1040.0 C1620.3,1047.7 1627.1,1060.2 1634.9,1070.0 C1642.7,1079.8 1653.4,1090.7 1663.6,1098.7 C1673.8,1106.8 1684.2,1112.4 1696.2,1118.3 C1708.2,1124.2 1721.4,1131.8 1735.4,1134.0 C1749.4,1136.2 1772.6,1131.8 1780.0,1131.4 L2341.6,1083.3" fill="none" stroke="#1891d2" stroke-width="4.6"/><circle cx="1567" cy="991" r="3.2" fill="#3a7a3a" fill-opacity="0.8"/><circle cx="1577" cy="991" r="3.2" fill="#3a7a3a" fill-opacity="0.8"/><circle cx="1587" cy="991" r="3.2" fill="#3a7a3a" fill-opacity="0.8"/><path d="M1512,470 Q1513,458 1532,457.5 Q1551,458 1552,470 L1556,555 Q1556,572 1535,572.5 Q1513,572 1512,556 Z" fill="url(#carG)" fill-opacity="0.82" stroke="#d8c8c0" stroke-opacity="0.5" stroke-width="1.2"/><path d="M1528.6,481.7 L1542,617.7" stroke="#f4f4f4" stroke-width="1.3"/><circle cx="2237.7" cy="1134" r="63.5" fill="none" stroke="#e01010" stroke-width="2"/><path d="M2228.2,1130 L2226.5,1106" stroke="#10e010" stroke-width="3.2"/><path d="M2228.2,1130 L2253,1127.5" stroke="#ee1010" stroke-width="3.2"/><circle cx="2228.2" cy="1130" r="2.6" fill="#1010ee"/><path d="M1630.0,396.0 L1630.8,415.0 L1647.0,414.0 L1646.5,407.0" fill="none" stroke="#3a3a3a" stroke-width="1.2" stroke-dasharray="1.5 1.5"/><path d="M1878.0,948.0 L1878.8,967.0 L1895.0,966.0 L1894.5,959.0" fill="none" stroke="#3a3a3a" stroke-width="1.2" stroke-dasharray="1.5 1.5"/><path d="M1919.0,945.2 L1919.8,964.2 L1936.0,963.2 L1935.5,956.2" fill="none" stroke="#3a3a3a" stroke-width="1.2" stroke-dasharray="1.5 1.5"/><path d="M1960.0,942.3 L1960.8,961.3 L1977.0,960.3 L1976.5,953.3" fill="none" stroke="#3a3a3a" stroke-width="1.2" stroke-dasharray="1.5 1.5"/><path d="M2001.0,939.5 L2001.8,958.5 L2018.0,957.5 L2017.5,950.5" fill="none" stroke="#3a3a3a" stroke-width="1.2" stroke-dasharray="1.5 1.5"/><path d="M2042.0,936.7 L2042.8,955.7 L2059.0,954.7 L2058.5,947.7" fill="none" stroke="#3a3a3a" stroke-width="1.2" stroke-dasharray="1.5 1.5"/><path d="M2083.0,933.9 L2083.8,952.9 L2100.0,951.9 L2099.5,944.9" fill="none" stroke="#3a3a3a" stroke-width="1.2" stroke-dasharray="1.5 1.5"/><path d="M2124.0,931.0 L2124.8,950.0 L2141.0,949.0 L2140.5,942.0" fill="none" stroke="#3a3a3a" stroke-width="1.2" stroke-dasharray="1.5 1.5"/><path d="M1881.0,1002.0 L1881.8,1021.0 L1898.0,1020.0 L1897.5,1013.0" fill="none" stroke="#3a3a3a" stroke-width="1.2" stroke-dasharray="1.5 1.5"/><path d="M1922.0,999.2 L1922.8,1018.2 L1939.0,1017.2 L1938.5,1010.2" fill="none" stroke="#3a3a3a" stroke-width="1.2" stroke-dasharray="1.5 1.5"/><path d="M1963.0,996.3 L1963.8,1015.3 L1980.0,1014.3 L1979.5,1007.3" fill="none" stroke="#3a3a3a" stroke-width="1.2" stroke-dasharray="1.5 1.5"/><path d="M2004.0,993.5 L2004.8,1012.5 L2021.0,1011.5 L2020.5,1004.5" fill="none" stroke="#3a3a3a" stroke-width="1.2" stroke-dasharray="1.5 1.5"/><path d="M2045.0,990.7 L2045.8,1009.7 L2062.0,1008.7 L2061.5,1001.7" fill="none" stroke="#3a3a3a" stroke-width="1.2" stroke-dasharray="1.5 1.5"/><path d="M2086.0,987.9 L2086.8,1006.9 L2103.0,1005.9 L2102.5,998.9" fill="none" stroke="#3a3a3a" stroke-width="1.2" stroke-dasharray="1.5 1.5"/><path d="M1887.0,1056.0 L1887.8,1075.0 L1904.0,1074.0 L1903.5,1067.0" fill="none" stroke="#3a3a3a" stroke-width="1.2" stroke-dasharray="1.5 1.5"/><path d="M1928.0,1053.2 L1928.8,1072.2 L1945.0,1071.2 L1944.5,1064.2" fill="none" stroke="#3a3a3a" stroke-width="1.2" stroke-dasharray="1.5 1.5"/><path d="M1969.0,1050.3 L1969.8,1069.3 L1986.0,1068.3 L1985.5,1061.3" fill="none" stroke="#3a3a3a" stroke-width="1.2" stroke-dasharray="1.5 1.5"/><path d="M2010.0,1047.5 L2010.8,1066.5 L2027.0,1065.5 L2026.5,1058.5" fill="none" stroke="#3a3a3a" stroke-width="1.2" stroke-dasharray="1.5 1.5"/><path d="M2051.0,1044.7 L2051.8,1063.7 L2068.0,1062.7 L2067.5,1055.7" fill="none" stroke="#3a3a3a" stroke-width="1.2" stroke-dasharray="1.5 1.5"/><path d="M2092.0,1041.8 L2092.8,1060.8 L2109.0,1059.8 L2108.5,1052.8" fill="none" stroke="#3a3a3a" stroke-width="1.2" stroke-dasharray="1.5 1.5"/><path d="M2133.0,1039.0 L2133.8,1058.0 L2150.0,1057.0 L2149.5,1050.0" fill="none" stroke="#3a3a3a" stroke-width="1.2" stroke-dasharray="1.5 1.5"/><path d="M2174.0,1036.2 L2174.8,1055.2 L2191.0,1054.2 L2190.5,1047.2" fill="none" stroke="#3a3a3a" stroke-width="1.2" stroke-dasharray="1.5 1.5"/><defs><mask id="wm" maskUnits="userSpaceOnUse" x="870" y="220" width="280" height="280"><circle cx="1009.2" cy="360.1" r="128" fill="#fff"/><g fill="#000" stroke="#000" stroke-width="8" stroke-linejoin="round"><path d="M914.9,330 A99,99 0 0 1 1103.5,330 L1072,330 L1053.9,323.4 L963.2,323.4 L945,330 Z"/><path d="M911.7,377 L944,377 L984.6,419 L984.6,456 A99,99 0 0 1 911.7,377 Z"/><path d="M1106.7,377 L1074.4,377 L1033.8,419 L1033.8,456 A99,99 0 0 0 1106.7,377 Z"/></g></mask></defs><rect x="870" y="220" width="280" height="280" fill="#fff" mask="url(#wm)"/><polygon points="949.0,582.0 1050.8,504.0 1050.8,556.2 1154.0,556.2 1154.0,607.7 1050.8,607.7 1050.8,658.4" fill="none" stroke="#fff" stroke-width="2" stroke-dasharray="4.5 3"/><polygon points="1461.0,582.0 1358.8,504.0 1358.8,556.2 1255.7,556.2 1255.7,607.7 1358.8,607.7 1358.8,658.4" fill="none" stroke="#fff" stroke-width="2" stroke-dasharray="4.5 3"/><path d="M1310.2,456.9 A127.8,127.8 0 1 1 1475.8,456.9" fill="none" stroke="#fff" stroke-width="2"/><path d="M1370.6,382.0 A31.4,31.4 0 1 1 1411.4,382.0" fill="none" stroke="#fff" stroke-width="2"/><path d="M1475.8,456.9 L1411.4,382.0" stroke="#fff" stroke-width="2"/><path d="M1310.2,456.9 L1383.8,368.4" stroke="#fff" stroke-width="4"/><text x="1008.5" y="374" font-family="Liberation Sans" font-weight="700" font-size="37.5" text-anchor="middle" fill="#14f0ec">0.0deg</text><text x="1391.5" y="374" font-family="Liberation Sans" font-weight="700" font-size="38.5" text-anchor="middle" fill="#14f0ec">0.00km/h</text><text x="1395" y="429" font-family="Liberation Sans" font-weight="700" font-size="21" text-anchor="middle" fill="#fff">limited</text><text x="1394" y="452.5" font-family="Liberation Sans" font-weight="700" font-size="21" text-anchor="middle" fill="#fff">72km/h</text></svg>
<div style="left:0px;top:0px;width:2808px;height:34px;background:#2e2c2d;"></div><div class="t" style="left:0;width:2808px;text-align:center;top:5px;font-size:15.4px;line-height:22px;color:#f2f2f2;font-weight:700;">/home/hrkota/dev/autoware/install/autoware_launch/share/autoware_launch/rviz/autoware.rviz* - RViz</div><div style="left:2720px;top:16px;width:9px;height:2px;background:#fff;"></div><div style="left:2754px;top:11px;width:9px;height:9px;border:1.5px solid #fff;box-sizing:border-box;"></div><svg style="position:absolute;left:2782px;top:6px" width="20" height="20" viewBox="0 0 20 20"><circle cx="10" cy="9.5" r="9.3" fill="#e95420"/><path d="M6.3 5.8L13.7 13.2M13.7 5.8L6.3 13.2" stroke="#fff" stroke-width="1.3"/></svg><div style="left:0px;top:34px;width:2808px;height:22px;background:#ededed;border-bottom:1px solid #d2d2d2;box-sizing:border-box;"></div><div class="t" style="left:7.4px;top:36.8px;font-size:15px;line-height:18.0px;color:#111;font-weight:400;">File</div><div class="t" style="left:46px;top:36.8px;font-size:15px;line-height:18.0px;color:#111;font-weight:400;">Panels</div><div class="t" style="left:105px;top:36.8px;font-size:15px;line-height:18.0px;color:#111;font-weight:400;">Help</div><div style="left:7.5px;top:52.5px;width:8px;height:1.3px;background:#111;"></div><div style="left:46px;top:52.5px;width:9px;height:1.3px;background:#111;"></div><div style="left:105px;top:52.5px;width:10px;height:1.3px;background:#111;"></div><div style="left:0px;top:56px;width:2808px;height:38px;background:linear-gradient(#f6f6f6,#ebebeb);border-bottom:1px solid #c8c8c8;box-sizing:border-box;"></div><svg style="position:absolute;left:2px;top:66px" width="6" height="20"><circle cx="1.5" cy="2" r="0.6" fill="#bbb"/><circle cx="1.5" cy="5" r="0.6" fill="#bbb"/><circle cx="1.5" cy="8" r="0.6" fill="#bbb"/><circle cx="1.5" cy="11" r="0.6" fill="#bbb"/><circle cx="1.5" cy="14" r="0.6" fill="#bbb"/><circle cx="1.5" cy="17" r="0.6" fill="#bbb"/><circle cx="4.5" cy="2" r="0.6" fill="#bbb"/><circle cx="4.5" cy="5" r="0.6" fill="#bbb"/><circle cx="4.5" cy="8" r="0.6" fill="#bbb"/><circle cx="4.5" cy="11" r="0.6" fill="#bbb"/><circle cx="4.5" cy="14" r="0.6" fill="#bbb"/><circle cx="4.5" cy="17" r="0.6" fill="#bbb"/></svg><div style="left:10px;top:60px;width:84.5px;height:30.5px;background:#dadada;border:1px solid #b2b2b2;border-radius:3px;box-sizing:border-box;"></div><div class="t" style="left:31.3px;top:67px;font-size:12.2px;line-height:18px;color:#1a1a1a;white-space:nowrap;">Interact</div><div class="t" style="left:117.2px;top:67px;font-size:12.2px;line-height:18px;color:#1a1a1a;white-space:nowrap;">Move Camera</div><div class="t" style="left:235px;top:67px;font-size:12.2px;line-height:18px;color:#1a1a1a;white-space:nowrap;">Select</div><div class="t" style="left:313px;top:67px;font-size:12.2px;line-height:18px;color:#1a1a1a;white-space:nowrap;">Focus Camera</div><div class="t" style="left:431px;top:67px;font-size:12.2px;line-height:18px;color:#1a1a1a;white-space:nowrap;">Measure</div><div class="t" style="left:521px;top:67px;font-size:12.2px;line-height:18px;color:#1a1a1a;white-space:nowrap;">2D Pose Estimate</div><div class="t" style="left:659px;top:67px;font-size:12.2px;line-height:18px;color:#1a1a1a;white-space:nowrap;">2D Goal Pose</div><div class="t" style="left:782px;top:67px;font-size:12.2px;line-height:18px;color:#1a1a1a;white-space:nowrap;">2D Dummy Pedestrian</div><div class="t" style="left:946px;top:67px;font-size:12.2px;line-height:18px;color:#1a1a1a;white-space:nowrap;">2D Dummy Car</div><div class="t" style="left:1069.7px;top:67px;font-size:12.2px;line-height:18px;color:#1a1a1a;white-space:nowrap;">2D Dummy Bus</div><div class="t" style="left:1195.6px;top:67px;font-size:12.2px;line-height:18px;color:#1a1a1a;white-space:nowrap;">2D Checkpoint Pose</div><div class="t" style="left:1347.8px;top:67px;font-size:12.2px;line-height:18px;color:#1a1a1a;white-space:nowrap;">Delete All Objects</div><div style="left:627.2px;top:57.3px;width:119px;height:36px;border:2px solid #ff0000;border-radius:2px;box-sizing:border-box;"></div><svg style="position:absolute;left:12.8px;top:66px;overflow:visible" width="17" height="18" viewBox="0 0 17 18"><path d="M4,10 L4,2.2 Q4,0.8 5.5,0.8 Q7,0.8 7,2.2 L7,6.3 Q7,5 8.3,5 Q9.6,5 9.6,6.3 L9.6,6.8 Q9.6,5.5 10.9,5.5 Q12.2,5.5 12.2,6.8 L12.2,7.8 Q12.2,6.5 13.5,6.5 Q14.8,6.5 14.8,7.8 L14.8,13 Q14.8,14.5 13.8,15.5 L13.8,16.8 L5.5,16.8 L5.5,15.5 L1.2,11.2 Q0.3,10.2 1.2,9.3 Q2.2,8.6 3.2,9.4 Z" fill="#fff" stroke="#111" stroke-width="1.1" stroke-linejoin="round"/><path d="M7,6.3V9.5M9.6,6.8V9.5M12.2,7.8V9.5" stroke="#111" stroke-width=".8"/></svg><svg style="position:absolute;left:98.8px;top:66px;overflow:visible" width="16" height="16" viewBox="0 0 16 16"><path d="M8 .8l2.2 2.6H8.9v3.7h3.7V5.8l2.6 2.2-2.6 2.2V8.9H8.9v3.7h1.3L8 15.2l-2.2-2.6h1.3V8.9H3.4v1.3L.8 8l2.6-2.2v1.3h3.7V3.4H5.8z" fill="#f4f4f4" stroke="#888" stroke-width=".9"/></svg><svg style="position:absolute;left:216.9px;top:68px;overflow:visible" width="16" height="14" viewBox="0 0 16 14"><rect x=".7" y=".7" width="14.6" height="12.6" fill="#fbf6b8" stroke="#222" stroke-width="1" stroke-dasharray="1.6 1.2"/><path d="M12.5 13.3L15.3 10.5V13.3z" fill="#111"/></svg><svg style="position:absolute;left:293.8px;top:66px;overflow:visible" width="17" height="17" viewBox="0 0 17 17"><circle cx="8.5" cy="8.5" r="4.6" fill="#eee" stroke="#8a8a8a" stroke-width="1"/><path d="M8.5 .5v16M.5 8.5h16" stroke="#8a8a8a" stroke-width="1"/><circle cx="8.5" cy="8.5" r="2" fill="none" stroke="#999" stroke-width=".8"/></svg><svg style="position:absolute;left:413px;top:72px;overflow:visible" width="16" height="6" viewBox="0 0 16 6"><rect x=".5" y=".5" width="15" height="5" fill="#e8d9a0" stroke="#777" stroke-width="1"/><path d="M3 .8v2M5.5 .8v1.5M8 .8v2M10.5 .8v1.5M13 .8v2" stroke="#8a7a50" stroke-width=".6"/></svg><svg style="position:absolute;left:502.8px;top:68px;overflow:visible" width="16" height="14" viewBox="0 0 16 14"><path d="M1 13.2L12.6 2.6" stroke="#13c413" stroke-width="2"/><path d="M15.4.6L13.8 6.6 9.6 2.2z" fill="#13c413"/></svg><svg style="position:absolute;left:640.8px;top:68px;overflow:visible" width="16" height="14" viewBox="0 0 16 14"><path d="M1 13.2L12.6 2.6" stroke="#13c413" stroke-width="2"/><path d="M15.4.6L13.8 6.6 9.6 2.2z" fill="#13c413"/></svg><svg style="position:absolute;left:756px;top:62px;overflow:visible" width="24" height="25" viewBox="0 0 24 25"><polygon points="2.4,10 7.4,2.2 16.5,2.2 19.6,7.7 16.1,12 13.6,7.6 11,12 6.6,6.6" fill="#1d5a9e"/><polygon points="4.9,13.3 6.6,9 11,14.4 13.6,10 16.1,14.4 21.2,10.3 18.7,13.3 16.5,17.8 7.4,17.8" fill="#060606"/><text x="0.3" y="23.3" font-family="Liberation Sans" font-size="5.6" font-style="italic" textLength="23" lengthAdjust="spacingAndGlyphs" fill="#111">Autoware</text></svg><svg style="position:absolute;left:919.5px;top:62px;overflow:visible" width="24" height="25" viewBox="0 0 24 25"><polygon points="2.4,10 7.4,2.2 16.5,2.2 19.6,7.7 16.1,12 13.6,7.6 11,12 6.6,6.6" fill="#1d5a9e"/><polygon points="4.9,13.3 6.6,9 11,14.4 13.6,10 16.1,14.4 21.2,10.3 18.7,13.3 16.5,17.8 7.4,17.8" fill="#060606"/><text x="0.3" y="23.3" font-family="Liberation Sans" font-size="5.6" font-style="italic" textLength="23" lengthAdjust="spacingAndGlyphs" fill="#111">Autoware</text></svg><svg style="position:absolute;left:1043.3px;top:62px;overflow:visible" width="24" height="25" viewBox="0 0 24 25"><polygon points="2.4,10 7.4,2.2 16.5,2.2 19.6,7.7 16.1,12 13.6,7.6 11,12 6.6,6.6" fill="#1d5a9e"/><polygon points="4.9,13.3 6.6,9 11,14.4 13.6,10 16.1,14.4 21.2,10.3 18.7,13.3 16.5,17.8 7.4,17.8" fill="#060606"/><text x="0.3" y="23.3" font-family="Liberation Sans" font-size="5.6" font-style="italic" textLength="23" lengthAdjust="spacingAndGlyphs" fill="#111">Autoware</text></svg><svg style="position:absolute;left:1169.3px;top:62px;overflow:visible" width="24" height="25" viewBox="0 0 24 25"><polygon points="2.4,10 7.4,2.2 16.5,2.2 19.6,7.7 16.1,12 13.6,7.6 11,12 6.6,6.6" fill="#1d5a9e"/><polygon points="4.9,13.3 6.6,9 11,14.4 13.6,10 16.1,14.4 21.2,10.3 18.7,13.3 16.5,17.8 7.4,17.8" fill="#060606"/><text x="0.3" y="23.3" font-family="Liberation Sans" font-size="5.6" font-style="italic" textLength="23" lengthAdjust="spacingAndGlyphs" fill="#111">Autoware</text></svg><svg style="position:absolute;left:1321.5px;top:62px;overflow:visible" width="24" height="25" viewBox="0 0 24 25"><polygon points="2.4,10 7.4,2.2 16.5,2.2 19.6,7.7 16.1,12 13.6,7.6 11,12 6.6,6.6" fill="#1d5a9e"/><polygon points="4.9,13.3 6.6,9 11,14.4 13.6,10 16.1,14.4 21.2,10.3 18.7,13.3 16.5,17.8 7.4,17.8" fill="#060606"/><text x="0.3" y="23.3" font-family="Liberation Sans" font-size="5.6" font-style="italic" textLength="23" lengthAdjust="spacingAndGlyphs" fill="#111">Autoware</text></svg><svg style="position:absolute;left:1466px;top:69px;overflow:visible" width="12" height="12" viewBox="0 0 12 12"><path d="M4.5 .6h3v3.9h3.9v3H7.5v3.9h-3V7.5H.6v-3h3.9z" fill="#c7dbf2" stroke="#2a5ea8" stroke-width="1.1"/></svg><svg style="position:absolute;left:1514px;top:73px;overflow:visible" width="12" height="4" viewBox="0 0 12 4"><rect x=".6" y=".6" width="10.8" height="3" rx=".7" fill="#c7dbf2" stroke="#2a5ea8" stroke-width="1.1"/></svg><svg style="position:absolute;left:1528px;top:84px;overflow:visible" width="6" height="4" viewBox="0 0 6 4"><path d="M.2.4h5.6L3 3.4z" fill="#555"/></svg><div style="left:0px;top:95px;width:722px;height:23px;background:#b8b8b8;"></div><svg style="position:absolute;left:1px;top:97px" width="18" height="18" viewBox="0 0 18 18"><rect x="1" y="1.5" width="15" height="11" fill="#222"/><rect x="2.2" y="2.7" width="4.2" height="8.6" fill="#d98b8b"/><rect x="6.4" y="2.7" width="4.2" height="8.6" fill="#8fd88f"/><rect x="10.6" y="2.7" width="4.2" height="8.6" fill="#a9a9f0"/><path d="M7.5 12.5h2v2h3v1.5h-8v-1.5h3z" fill="#222"/></svg><div class="t" style="left:23px;top:98.3px;font-size:15px;line-height:18.0px;color:#111;font-weight:400;">Displays</div><div style="left:703px;top:98.0px;width:17px;height:17px;background:#fbfbfb;border:1px solid #8a8a8a;border-radius:3px;box-sizing:border-box;"></div><svg style="position:absolute;left:706px;top:101.0px" width="11" height="11" viewBox="0 0 11 11"><circle cx="5.5" cy="5.5" r="5.2" fill="#c8102e"/><path d="M3.4 3.4L7.6 7.6M7.6 3.4L3.4 7.6" stroke="#fff" stroke-width="1.3"/></svg><div style="left:0px;top:118px;width:722px;height:296.5px;background:#fff;border-right:1px solid #c9c9c9;border-bottom:1px solid #c9c9c9;box-sizing:border-box;"></div><div style="left:401px;top:118px;width:1px;height:295px;background:#e6e6e6;"></div><svg style="position:absolute;left:5.5px;top:123.5px;overflow:visible" width="5" height="8" viewBox="0 0 5 8"><path d="M.5.5L4.5 4 .5 7.5z" fill="#555"/></svg><svg style="position:absolute;left:21.5px;top:120.5px;overflow:visible" width="14" height="14" viewBox="0 0 14 14"><circle cx="7" cy="7" r="4.6" fill="none" stroke="#4a7fc8" stroke-width="2.6" stroke-dasharray="2 1.6"/><circle cx="7" cy="7" r="3.6" fill="none" stroke="#4a7fc8" stroke-width="1.6"/><circle cx="7" cy="7" r="1.4" fill="#fff"/></svg><div class="t" style="left:43.5px;top:119.3px;font-size:15px;line-height:18.0px;color:#111;font-weight:400;">Global Options</div><svg style="position:absolute;left:5.5px;top:142.5px;overflow:visible" width="5" height="8" viewBox="0 0 5 8"><path d="M.5.5L4.5 4 .5 7.5z" fill="#555"/></svg><svg style="position:absolute;left:21.5px;top:139.5px;overflow:visible" width="14" height="14" viewBox="0 0 14 14"><path d="M1.5 8.2l3.3 4.2L12.8 1.5" fill="none" stroke="#1e7a1e" stroke-width="1.8"/></svg><div class="t" style="left:43.5px;top:138.3px;font-size:15px;line-height:18.0px;color:#111;font-weight:400;">Global Status: Ok</div><svg style="position:absolute;left:5.5px;top:161.5px;overflow:visible" width="5" height="8" viewBox="0 0 5 8"><path d="M.5.5L4.5 4 .5 7.5z" fill="#555"/></svg><svg style="position:absolute;left:21px;top:157.5px;overflow:visible" width="16" height="15" viewBox="0 0 16 15"><path d="M.5 2.5v11.8h15V4.6H7.3L5.8 1.4H1.6z" fill="#8e8e8e"/><path d="M1.3 5.3h14v9H1.3z" fill="#6e9fd8"/><path d="M1.3 5.3h14v2.4H1.3z" fill="#a9c8ee"/></svg><div class="t" style="left:43.5px;top:157.3px;font-size:15px;line-height:18.0px;color:#2a78d0;font-weight:700;">System</div><svg style="position:absolute;left:404px;top:158.5px;overflow:visible" width="14" height="14" viewBox="0 0 14 14"><rect x=".5" y=".5" width="13" height="13" fill="#fff" stroke="#a8a8a8"/><path d="M3.2 7.1l2.4 3.6 4.6-7.6" fill="none" stroke="#1f5fae" stroke-width="1.4"/></svg><svg style="position:absolute;left:5.5px;top:180.5px;overflow:visible" width="5" height="8" viewBox="0 0 5 8"><path d="M.5.5L4.5 4 .5 7.5z" fill="#555"/></svg><svg style="position:absolute;left:21px;top:176.5px;overflow:visible" width="16" height="15" viewBox="0 0 16 15"><path d="M.5 2.5v11.8h15V4.6H7.3L5.8 1.4H1.6z" fill="#8e8e8e"/><path d="M1.3 5.3h14v9H1.3z" fill="#6e9fd8"/><path d="M1.3 5.3h14v2.4H1.3z" fill="#a9c8ee"/></svg><div class="t" style="left:43.5px;top:176.3px;font-size:15px;line-height:18.0px;color:#2a78d0;font-weight:700;">Map</div><svg style="position:absolute;left:404px;top:177.5px;overflow:visible" width="14" height="14" viewBox="0 0 14 14"><rect x=".5" y=".5" width="13" height="13" fill="#fff" stroke="#a8a8a8"/><path d="M3.2 7.1l2.4 3.6 4.6-7.6" fill="none" stroke="#1f5fae" stroke-width="1.4"/></svg><svg style="position:absolute;left:5.5px;top:199.5px;overflow:visible" width="5" height="8" viewBox="0 0 5 8"><path d="M.5.5L4.5 4 .5 7.5z" fill="#555"/></svg><svg style="position:absolute;left:21px;top:195.5px;overflow:visible" width="16" height="15" viewBox="0 0 16 15"><path d="M.5 2.5v11.8h15V4.6H7.3L5.8 1.4H1.6z" fill="#8e8e8e"/><path d="M1.3 5.3h14v9H1.3z" fill="#6e9fd8"/><path d="M1.3 5.3h14v2.4H1.3z" fill="#a9c8ee"/></svg><div class="t" style="left:43.5px;top:195.3px;font-size:15px;line-height:18.0px;color:#2a78d0;font-weight:700;">Sensing</div><svg style="position:absolute;left:404px;top:196.5px;overflow:visible" width="14" height="14" viewBox="0 0 14 14"><rect x=".5" y=".5" width="13" height="13" fill="#fff" stroke="#a8a8a8"/><path d="M3.2 7.1l2.4 3.6 4.6-7.6" fill="none" stroke="#1f5fae" stroke-width="1.4"/></svg><svg style="position:absolute;left:5.5px;top:218.5px;overflow:visible" width="5" height="8" viewBox="0 0 5 8"><path d="M.5.5L4.5 4 .5 7.5z" fill="#555"/></svg><svg style="position:absolute;left:21px;top:214.5px;overflow:visible" width="16" height="15" viewBox="0 0 16 15"><path d="M.5 2.5v11.8h15V4.6H7.3L5.8 1.4H1.6z" fill="#8e8e8e"/><path d="M1.3 5.3h14v9H1.3z" fill="#6e9fd8"/><path d="M1.3 5.3h14v2.4H1.3z" fill="#a9c8ee"/></svg><div class="t" style="left:43.5px;top:214.3px;font-size:15px;line-height:18.0px;color:#2a78d0;font-weight:700;">Localization</div><svg style="position:absolute;left:404px;top:215.5px;overflow:visible" width="14" height="14" viewBox="0 0 14 14"><rect x=".5" y=".5" width="13" height="13" fill="#fff" stroke="#a8a8a8"/><path d="M3.2 7.1l2.4 3.6 4.6-7.6" fill="none" stroke="#1f5fae" stroke-width="1.4"/></svg><svg style="position:absolute;left:5.5px;top:237.5px;overflow:visible" width="5" height="8" viewBox="0 0 5 8"><path d="M.5.5L4.5 4 .5 7.5z" fill="#555"/></svg><svg style="position:absolute;left:21px;top:233.5px;overflow:visible" width="16" height="15" viewBox="0 0 16 15"><path d="M.5 2.5v11.8h15V4.6H7.3L5.8 1.4H1.6z" fill="#8e8e8e"/><path d="M1.3 5.3h14v9H1.3z" fill="#6e9fd8"/><path d="M1.3 5.3h14v2.4H1.3z" fill="#a9c8ee"/></svg><div class="t" style="left:43.5px;top:233.3px;font-size:15px;line-height:18.0px;color:#2a78d0;font-weight:700;">Perception</div><svg style="position:absolute;left:404px;top:234.5px;overflow:visible" width="14" height="14" viewBox="0 0 14 14"><rect x=".5" y=".5" width="13" height="13" fill="#fff" stroke="#a8a8a8"/><path d="M3.2 7.1l2.4 3.6 4.6-7.6" fill="none" stroke="#1f5fae" stroke-width="1.4"/></svg><svg style="position:absolute;left:5.5px;top:256.5px;overflow:visible" width="5" height="8" viewBox="0 0 5 8"><path d="M.5.5L4.5 4 .5 7.5z" fill="#555"/></svg><svg style="position:absolute;left:21px;top:252.5px;overflow:visible" width="16" height="15" viewBox="0 0 16 15"><path d="M.5 2.5v11.8h15V4.6H7.3L5.8 1.4H1.6z" fill="#8e8e8e"/><path d="M1.3 5.3h14v9H1.3z" fill="#6e9fd8"/><path d="M1.3 5.3h14v2.4H1.3z" fill="#a9c8ee"/></svg><div class="t" style="left:43.5px;top:252.3px;font-size:15px;line-height:18.0px;color:#2a78d0;font-weight:700;">Planning</div><svg style="position:absolute;left:404px;top:253.5px;overflow:visible" width="14" height="14" viewBox="0 0 14 14"><rect x=".5" y=".5" width="13" height="13" fill="#fff" stroke="#a8a8a8"/><path d="M3.2 7.1l2.4 3.6 4.6-7.6" fill="none" stroke="#1f5fae" stroke-width="1.4"/></svg><svg style="position:absolute;left:5.5px;top:275.5px;overflow:visible" width="5" height="8" viewBox="0 0 5 8"><path d="M.5.5L4.5 4 .5 7.5z" fill="#555"/></svg><svg style="position:absolute;left:21px;top:271.5px;overflow:visible" width="16" height="15" viewBox="0 0 16 15"><path d="M.5 2.5v11.8h15V4.6H7.3L5.8 1.4H1.6z" fill="#8e8e8e"/><path d="M1.3 5.3h14v9H1.3z" fill="#6e9fd8"/><path d="M1.3 5.3h14v2.4H1.3z" fill="#a9c8ee"/></svg><div class="t" style="left:43.5px;top:271.3px;font-size:15px;line-height:18.0px;color:#2a78d0;font-weight:700;">Control</div><svg style="position:absolute;left:404px;top:272.5px;overflow:visible" width="14" height="14" viewBox="0 0 14 14"><rect x=".5" y=".5" width="13" height="13" fill="#fff" stroke="#a8a8a8"/><path d="M3.2 7.1l2.4 3.6 4.6-7.6" fill="none" stroke="#1f5fae" stroke-width="1.4"/></svg><svg style="position:absolute;left:353px;top:416px;overflow:visible" width="16" height="2" viewBox="0 0 16 2"><circle cx="1.0" cy="1" r=".55" fill="#9a9a9a"/><circle cx="3.7" cy="1" r=".55" fill="#9a9a9a"/><circle cx="6.4" cy="1" r=".55" fill="#9a9a9a"/><circle cx="9.1" cy="1" r=".55" fill="#9a9a9a"/><circle cx="11.8" cy="1" r=".55" fill="#9a9a9a"/><circle cx="14.5" cy="1" r=".55" fill="#9a9a9a"/></svg><div style="left:0px;top:425px;width:174.6px;height:24.80000000000001px;background:linear-gradient(#fcfcfc,#ececec);border:1px solid #b9b9b9;border-radius:3px;box-sizing:border-box;"></div><div class="t" style="left:0px;width:174.6px;text-align:center;top:429.2px;font-size:15px;line-height:18.0px;color:#1c1c1c;font-weight:400;">Add</div><div style="left:181px;top:425.5px;width:175.60000000000002px;height:24.30000000000001px;background:linear-gradient(#fcfcfc,#ececec);border:1px solid #b9b9b9;border-radius:3px;box-sizing:border-box;"></div><div class="t" style="left:181px;width:175.60000000000002px;text-align:center;top:429.4px;font-size:15px;line-height:18.0px;color:#bababa;font-weight:400;">Duplicate</div><div style="left:363px;top:425.5px;width:174.79999999999995px;height:24.30000000000001px;background:linear-gradient(#fcfcfc,#ececec);border:1px solid #b9b9b9;border-radius:3px;box-sizing:border-box;"></div><div class="t" style="left:363px;width:174.79999999999995px;text-align:center;top:429.4px;font-size:15px;line-height:18.0px;color:#bababa;font-weight:400;">Remove</div><div style="left:544px;top:425.5px;width:175.79999999999995px;height:24.30000000000001px;background:linear-gradient(#fcfcfc,#ececec);border:1px solid #b9b9b9;border-radius:3px;box-sizing:border-box;"></div><div class="t" style="left:544px;width:175.79999999999995px;text-align:center;top:429.4px;font-size:15px;line-height:18.0px;color:#bababa;font-weight:400;">Rename</div><svg style="position:absolute;left:353px;top:456px;overflow:visible" width="16" height="2" viewBox="0 0 16 2"><circle cx="1.0" cy="1" r=".55" fill="#9a9a9a"/><circle cx="3.7" cy="1" r=".55" fill="#9a9a9a"/><circle cx="6.4" cy="1" r=".55" fill="#9a9a9a"/><circle cx="9.1" cy="1" r=".55" fill="#9a9a9a"/><circle cx="11.8" cy="1" r=".55" fill="#9a9a9a"/><circle cx="14.5" cy="1" r=".55" fill="#9a9a9a"/></svg><div style="left:0px;top:460px;width:722px;height:22px;background:#b8b8b8;"></div><svg style="position:absolute;left:1px;top:462px" width="18" height="18" viewBox="0 0 18 18"><path d="M1 4.5l4 3V9.5l-4 3z" fill="#444"/><rect x="5.5" y="4.5" width="11" height="8" rx="2.5" fill="#444"/></svg><div class="t" style="left:23px;top:462.8px;font-size:15px;line-height:18.0px;color:#111;font-weight:400;">Views</div><div style="left:703px;top:462.5px;width:17px;height:17px;background:#fbfbfb;border:1px solid #8a8a8a;border-radius:3px;box-sizing:border-box;"></div><svg style="position:absolute;left:706px;top:465.5px" width="11" height="11" viewBox="0 0 11 11"><circle cx="5.5" cy="5.5" r="5.2" fill="#c8102e"/><path d="M3.4 3.4L7.6 7.6M7.6 3.4L3.4 7.6" stroke="#fff" stroke-width="1.3"/></svg><div class="t" style="left:0px;top:492.8px;font-size:15px;line-height:18.0px;color:#111;font-weight:400;">Type:</div><div style="left:42.5px;top:488.6px;width:325px;height:24.2px;background:linear-gradient(#fdfdfd,#f0f0f0);border:1px solid #a9a9a9;border-radius:3px;box-sizing:border-box;"></div><div class="t" style="left:47px;top:492.8px;font-size:15px;line-height:18.0px;color:#111;font-weight:400;">TopDownOrtho (rviz_default_plugins)</div><svg style="position:absolute;left:351px;top:498.5px;overflow:visible" width="9" height="5" viewBox="0 0 9 5"><path d="M.3.3h8.4L4.5 4.7z" fill="#444"/></svg><div style="left:640.5px;top:488.6px;width:79.29999999999995px;height:24.199999999999932px;background:linear-gradient(#fcfcfc,#ececec);border:1px solid #b9b9b9;border-radius:3px;box-sizing:border-box;"></div><div class="t" style="left:640.5px;width:79.29999999999995px;text-align:center;top:492.5px;font-size:15px;line-height:18.0px;color:#1c1c1c;font-weight:400;">Zero</div><div style="left:0px;top:521.4px;width:722px;height:156.5px;background:#fff;border:1px solid #c9c9c9;box-sizing:border-box;"></div><div style="left:359.5px;top:522px;width:1px;height:155px;background:#e6e6e6;"></div><svg style="position:absolute;left:4px;top:526.8px;overflow:visible" width="8" height="5" viewBox="0 0 8 5"><path d="M.3.3h7L3.8 4.5z" fill="#555"/></svg><div class="t" style="left:21.4px;top:521.6px;font-size:15px;line-height:18.0px;color:#111;font-weight:700;">Current View</div><div class="t" style="left:362.3px;top:521.6px;font-size:15px;line-height:18.0px;color:#111;font-weight:700;">TopDownOrtho (rviz_default_plugins)</div><div class="t" style="left:41.4px;top:538.6px;font-size:15px;line-height:18.0px;color:#111;font-weight:400;">Near Clip Distance</div><div class="t" style="left:362.3px;top:538.6px;font-size:15px;line-height:18.0px;color:#111;font-weight:400;">0.01</div><div class="t" style="left:41.4px;top:555.7px;font-size:15px;line-height:18.0px;color:#111;font-weight:400;">Target Frame</div><div class="t" style="left:362.3px;top:555.7px;font-size:15px;line-height:18.0px;color:#111;font-weight:400;">viewer</div><div class="t" style="left:41.4px;top:572.7px;font-size:15px;line-height:18.0px;color:#111;font-weight:400;">Scale</div><div class="t" style="left:362.3px;top:572.7px;font-size:15px;line-height:18.0px;color:#111;font-weight:400;">23.7756</div><div class="t" style="left:41.4px;top:589.8px;font-size:15px;line-height:18.0px;color:#111;font-weight:400;">Angle</div><div class="t" style="left:362.3px;top:589.8px;font-size:15px;line-height:18.0px;color:#111;font-weight:400;">0.395</div><div class="t" style="left:41.4px;top:606.8px;font-size:15px;line-height:18.0px;color:#111;font-weight:400;">X</div><div class="t" style="left:362.3px;top:606.8px;font-size:15px;line-height:18.0px;color:#111;font-weight:400;">17.9987</div><div class="t" style="left:41.4px;top:623.9px;font-size:15px;line-height:18.0px;color:#111;font-weight:400;">Y</div><div class="t" style="left:362.3px;top:623.9px;font-size:15px;line-height:18.0px;color:#111;font-weight:400;">38.6914</div><svg style="position:absolute;left:6px;top:645.15px;overflow:visible" width="5" height="8" viewBox="0 0 5 8"><path d="M.5.5L4.5 4 .5 7.5z" fill="#555"/></svg><div class="t" style="left:21.4px;top:640.9px;font-size:15px;line-height:18.0px;color:#111;font-weight:400;">ThirdPersonFollower</div><div class="t" style="left:362.3px;top:640.9px;font-size:15px;line-height:18.0px;color:#111;font-weight:400;">ThirdPersonFollower (rviz)</div><svg style="position:absolute;left:6px;top:662.1999999999999px;overflow:visible" width="5" height="8" viewBox="0 0 5 8"><path d="M.5.5L4.5 4 .5 7.5z" fill="#555"/></svg><div class="t" style="left:21.4px;top:658.0px;font-size:15px;line-height:18.0px;color:#111;font-weight:400;">TopDownOrtho</div><div class="t" style="left:362.3px;top:658.0px;font-size:15px;line-height:18.0px;color:#111;font-weight:400;">TopDownOrtho (rviz)</div><div style="left:0px;top:684.6px;width:234.5px;height:23.699999999999932px;background:linear-gradient(#fcfcfc,#ececec);border:1px solid #b9b9b9;border-radius:3px;box-sizing:border-box;"></div><div class="t" style="left:0px;width:234.5px;text-align:center;top:688.2px;font-size:15px;line-height:18.0px;color:#1c1c1c;font-weight:400;">Save</div><div style="left:241px;top:684.6px;width:236.3px;height:23.699999999999932px;background:linear-gradient(#fcfcfc,#ececec);border:1px solid #b9b9b9;border-radius:3px;box-sizing:border-box;"></div><div class="t" style="left:241px;width:236.3px;text-align:center;top:688.2px;font-size:15px;line-height:18.0px;color:#1c1c1c;font-weight:400;">Remove</div><div style="left:484px;top:684.6px;width:235.79999999999995px;height:23.699999999999932px;background:linear-gradient(#fcfcfc,#ececec);border:1px solid #b9b9b9;border-radius:3px;box-sizing:border-box;"></div><div class="t" style="left:484px;width:235.79999999999995px;text-align:center;top:688.2px;font-size:15px;line-height:18.0px;color:#1c1c1c;font-weight:400;">Rename</div><div style="left:62px;top:712px;width:660px;height:1px;background:#bdbdbd;"></div><div style="left:62.5px;top:712px;width:128px;height:24.3px;background:#dcdcdc;border:1px solid #c2c2c2;border-top:none;border-radius:0 0 3px 3px;box-sizing:border-box;"></div><div style="left:0px;top:712.5px;width:63px;height:26px;background:#f2f2f2;border:1px solid #bdbdbd;border-top:none;border-left:none;border-radius:0 0 3px 0;box-sizing:border-box;"></div><div class="t" style="left:10px;top:717.1px;font-size:15px;line-height:18.0px;color:#111;font-weight:400;">Views</div><div class="t" style="left:75px;top:716.2px;font-size:15px;line-height:18.0px;color:#111;font-weight:400;">Tool Properties</div><svg style="position:absolute;left:353px;top:742px;overflow:visible" width="16" height="2" viewBox="0 0 16 2"><circle cx="1.0" cy="1" r=".55" fill="#9a9a9a"/><circle cx="3.7" cy="1" r=".55" fill="#9a9a9a"/><circle cx="6.4" cy="1" r=".55" fill="#9a9a9a"/><circle cx="9.1" cy="1" r=".55" fill="#9a9a9a"/><circle cx="11.8" cy="1" r=".55" fill="#9a9a9a"/><circle cx="14.5" cy="1" r=".55" fill="#9a9a9a"/></svg><div style="left:0px;top:746.3px;width:722px;height:21.40000000000009px;background:#b8b8b8;"></div><svg style="position:absolute;left:1px;top:748.3px" width="18" height="18" viewBox="0 0 18 18"><path d="M1.5 9L4 4h9l2.5 4.4-1.2 1.8-1.8-3.3-1.7 3.3-1.8-3.3-1.8 3.3z" fill="#1b5597"/><path d="M2.8 10.2l2-3 1.8 3.2 1.8-3.2 1.8 3.2 1.9-3.2 2.4-.5-4 8.2H5.5z" fill="#050505"/></svg><div class="t" style="left:23px;top:748.8px;font-size:15px;line-height:18.0px;color:#111;font-weight:400;">AutowareStatePanel</div><div style="left:703px;top:748.5px;width:17px;height:17px;background:#fbfbfb;border:1px solid #8a8a8a;border-radius:3px;box-sizing:border-box;"></div><svg style="position:absolute;left:706px;top:751.5px" width="11" height="11" viewBox="0 0 11 11"><circle cx="5.5" cy="5.5" r="5.2" fill="#c8102e"/><path d="M3.4 3.4L7.6 7.6M7.6 3.4L3.4 7.6" stroke="#fff" stroke-width="1.3"/></svg><div class="t" style="left:6.3px;top:778.5px;font-size:15.5px;line-height:18.6px;color:#111;font-weight:400;">OperationMode</div><div style="left:7px;top:798.5px;width:705.7px;height:77.89999999999998px;border:1px solid #d0d0d0;border-radius:3px;box-sizing:border-box;background:#ebebeb;"></div><div style="left:18px;top:809px;width:224px;height:55.700000000000045px;background:#ffa500;box-sizing:border-box;"></div><div class="t" style="left:18px;width:224px;text-align:center;top:828.6px;font-size:15px;line-height:18.0px;color:#111;font-weight:400;">STOP</div><div style="left:248px;top:809px;width:222.7px;height:24.600000000000023px;background:linear-gradient(#fcfcfc,#ececec);border:1px solid #b9b9b9;border-radius:3px;box-sizing:border-box;"></div><div class="t" style="left:248px;width:222.7px;text-align:center;top:813.1px;font-size:15px;line-height:18.0px;color:#1c1c1c;font-weight:400;">AUTO</div><div style="left:477.3px;top:809px;width:223.40000000000003px;height:24.600000000000023px;background:#dedede;border:1px solid #b9b9b9;border-radius:3px;box-sizing:border-box;"></div><div class="t" style="left:477.3px;width:223.40000000000003px;text-align:center;top:813.1px;font-size:15px;line-height:18.0px;color:#bababa;font-weight:400;">STOP</div><div style="left:248px;top:840.4px;width:222.7px;height:24.300000000000068px;background:linear-gradient(#fcfcfc,#ececec);border:1px solid #b9b9b9;border-radius:3px;box-sizing:border-box;"></div><div class="t" style="left:248px;width:222.7px;text-align:center;top:844.3px;font-size:15px;line-height:18.0px;color:#1c1c1c;font-weight:400;">LOCAL</div><div style="left:477.3px;top:840.4px;width:223.40000000000003px;height:24.300000000000068px;background:linear-gradient(#fcfcfc,#ececec);border:1px solid #b9b9b9;border-radius:3px;box-sizing:border-box;"></div><div class="t" style="left:477.3px;width:223.40000000000003px;text-align:center;top:844.3px;font-size:15px;line-height:18.0px;color:#1c1c1c;font-weight:400;">REMOTE</div><div class="t" style="left:6.3px;top:884.7px;font-size:15.5px;line-height:18.6px;color:#111;font-weight:400;">AutowareControl</div><div style="left:7px;top:904.6px;width:705.7px;height:47.10000000000002px;border:1px solid #d0d0d0;border-radius:3px;box-sizing:border-box;background:#ebebeb;"></div><div style="left:18px;top:915px;width:224px;height:24.700000000000045px;background:#00ff00;box-sizing:border-box;"></div><div class="t" style="left:18px;width:224px;text-align:center;top:919.1px;font-size:15px;line-height:18.0px;color:#111;font-weight:400;">Enable</div><div style="left:248px;top:915px;width:222.7px;height:24.700000000000045px;background:#dedede;border:1px solid #b9b9b9;border-radius:3px;box-sizing:border-box;"></div><div class="t" style="left:248px;width:222.7px;text-align:center;top:919.1px;font-size:15px;line-height:18.0px;color:#bababa;font-weight:400;">Enable</div><div style="left:477.3px;top:915px;width:223.40000000000003px;height:24.700000000000045px;background:linear-gradient(#fcfcfc,#ececec);border:1px solid #b9b9b9;border-radius:3px;box-sizing:border-box;"></div><div class="t" style="left:477.3px;width:223.40000000000003px;text-align:center;top:919.1px;font-size:15px;line-height:18.0px;color:#1c1c1c;font-weight:400;">Disable</div><div class="t" style="left:6.3px;top:960.0px;font-size:15px;line-height:18.0px;color:#111;font-weight:400;">Routing</div><div class="t" style="left:184.6px;top:960.0px;font-size:15px;line-height:18.0px;color:#111;font-weight:400;">Localization</div><div class="t" style="left:363.2px;top:960.0px;font-size:15px;line-height:18.0px;color:#111;font-weight:400;">Motion</div><div class="t" style="left:541.2px;top:960.0px;font-size:15px;line-height:18.0px;color:#111;font-weight:400;">FalSafe</div><div style="left:7.1px;top:979.4px;width:170.6px;height:71.89999999999998px;border:1px solid #d0d0d0;border-radius:3px;box-sizing:border-box;background:#ebebeb;"></div><div style="left:185.4px;top:979.4px;width:171.20000000000002px;height:71.89999999999998px;border:1px solid #d0d0d0;border-radius:3px;box-sizing:border-box;background:#ebebeb;"></div><div style="left:364.3px;top:979.4px;width:170.09999999999997px;height:71.89999999999998px;border:1px solid #d0d0d0;border-radius:3px;box-sizing:border-box;background:#ebebeb;"></div><div style="left:542px;top:979.4px;width:170.70000000000005px;height:71.89999999999998px;border:1px solid #d0d0d0;border-radius:3px;box-sizing:border-box;background:#ebebeb;"></div><div style="left:18px;top:990px;width:148px;height:19px;background:#00ff00;box-sizing:border-box;"></div><div class="t" style="left:18px;width:148px;text-align:center;top:991.6px;font-size:14.5px;line-height:17.4px;color:#111;font-weight:400;">SET</div><div style="left:18.5px;top:1015.6px;width:147.0px;height:23.699999999999932px;background:linear-gradient(#fcfcfc,#ececec);border:1px solid #b9b9b9;border-radius:3px;box-sizing:border-box;"></div><div class="t" style="left:18.5px;width:147.0px;text-align:center;top:1019.2px;font-size:15px;line-height:18.0px;color:#1c1c1c;font-weight:400;">Clear Route</div><div style="left:196px;top:990px;width:149.2px;height:49.90000000000009px;background:#00ff00;box-sizing:border-box;"></div><div class="t" style="left:196px;width:149.2px;text-align:center;top:1007.0px;font-size:14.5px;line-height:17.4px;color:#111;font-weight:400;">INITIALIZED</div><div style="left:375.2px;top:990px;width:147.8px;height:19px;background:#ececec;box-sizing:border-box;border:1.6px solid #111;"></div><div class="t" style="left:375.2px;width:147.8px;text-align:center;top:991.6px;font-size:14.5px;line-height:17.4px;color:#111;font-weight:400;">INIT</div><div style="left:375.2px;top:1015.6px;width:147.8px;height:23.699999999999932px;background:linear-gradient(#fcfcfc,#ececec);border:1px solid #b9b9b9;border-radius:3px;box-sizing:border-box;"></div><div class="t" style="left:375.2px;width:147.8px;text-align:center;top:1019.2px;font-size:15px;line-height:18.0px;color:#1c1c1c;font-weight:400;">Accept Start</div><div style="left:553px;top:990px;width:148px;height:22px;background:#00ff00;box-sizing:border-box;"></div><div class="t" style="left:553px;width:148px;text-align:center;top:993.1px;font-size:14.5px;line-height:17.4px;color:#111;font-weight:400;">NONE</div><div style="left:553px;top:1018px;width:148px;height:22px;background:#00ff00;box-sizing:border-box;"></div><div class="t" style="left:553px;width:148px;text-align:center;top:1021.1px;font-size:14.5px;line-height:17.4px;color:#111;font-weight:400;">NONE</div><div class="t" style="left:250px;width:104px;text-align:right;top:1058px;font-size:15px;line-height:18px;color:#111">GEAR:</div><div class="t" style="left:524.4px;top:1058.8px;font-size:15px;line-height:18.0px;color:#111;font-weight:400;">INIT</div><div style="left:6.3px;top:1081.2px;width:171.39999999999998px;height:24.299999999999955px;background:linear-gradient(#fcfcfc,#ececec);border:1px solid #b9b9b9;border-radius:3px;box-sizing:border-box;"></div><div class="t" style="left:6.3px;width:171.39999999999998px;text-align:center;top:1085.1px;font-size:15px;line-height:18.0px;color:#1c1c1c;font-weight:400;">Send Velocity Limit</div><div style="left:184.6px;top:1082px;width:172px;height:23.5px;background:#fff;border:1px solid #a9a9a9;border-radius:3px;box-sizing:border-box;"></div><div style="left:342px;top:1083px;width:1px;height:21.5px;background:#d6d6d6;"></div><svg style="position:absolute;left:345px;top:1087px;overflow:visible" width="8" height="14" viewBox="0 0 8 14"><path d="M.8 4.5L4 1.2 7.2 4.5z" fill="#555"/><path d="M.8 9.5L4 12.8 7.2 9.5z" fill="#555"/></svg><div class="t" style="left:189px;top:1085.8px;font-size:15px;line-height:18.0px;color:#111;font-weight:400;">0</div><div class="t" style="left:370px;top:1085.8px;font-size:15px;line-height:18.0px;color:#111;font-weight:400;">[km/h]</div><div style="left:541.2px;top:1081.2px;width:171.5px;height:24.299999999999955px;background:linear-gradient(#88f088,#5ee05e);border:1px solid #3fae3f;border-radius:3px;box-sizing:border-box;"></div><div class="t" style="left:541.2px;width:171.5px;text-align:center;top:1085.1px;font-size:15px;line-height:18.0px;color:#1c1c1c;font-weight:400;">Set Emergency</div><svg style="position:absolute;left:353px;top:1118px;overflow:visible" width="16" height="2" viewBox="0 0 16 2"><circle cx="1.0" cy="1" r=".55" fill="#9a9a9a"/><circle cx="3.7" cy="1" r=".55" fill="#9a9a9a"/><circle cx="6.4" cy="1" r=".55" fill="#9a9a9a"/><circle cx="9.1" cy="1" r=".55" fill="#9a9a9a"/><circle cx="11.8" cy="1" r=".55" fill="#9a9a9a"/><circle cx="14.5" cy="1" r=".55" fill="#9a9a9a"/></svg><div style="left:0px;top:1122px;width:722px;height:22px;background:#b8b8b8;"></div><svg style="position:absolute;left:1px;top:1124px" width="18" height="18" viewBox="0 0 18 18"><rect x="1.5" y="2.5" width="14" height="13" fill="#dfe6ee" stroke="#555" stroke-width="1"/><rect x="3" y="4" width="11" height="8" fill="#5a7fb0"/><path d="M3 12l3.5-3.5 2.5 2.5 2-2 3 3z" fill="#e8eef4"/></svg><div class="t" style="left:23px;top:1124.8px;font-size:15px;line-height:18.0px;color:#111;font-weight:400;">RecognitionResultOnImage</div><div style="left:703px;top:1124.5px;width:17px;height:17px;background:#fbfbfb;border:1px solid #8a8a8a;border-radius:3px;box-sizing:border-box;"></div><svg style="position:absolute;left:706px;top:1127.5px" width="11" height="11" viewBox="0 0 11 11"><circle cx="5.5" cy="5.5" r="5.2" fill="#c8102e"/><path d="M3.4 3.4L7.6 7.6M7.6 3.4L3.4 7.6" stroke="#fff" stroke-width="1.3"/></svg><div style="left:5.7px;top:1152.8px;width:707px;height:332.7px;background:#fff;"></div><svg style="position:absolute;left:0;top:0;overflow:visible" width="1" height="1"><text transform="translate(40.2,1334) scale(1.83,1)" font-family="Liberation Sans" font-size="73" stroke="#000" stroke-width="0.9" fill="#000">N</text><text transform="translate(138.6,1334) scale(1.94,1)" font-family="Liberation Sans" font-size="73" stroke="#000" stroke-width="0.9" fill="#000">o</text><text transform="translate(256.9,1334) scale(2.09,1)" font-family="Liberation Sans" font-size="73" stroke="#000" stroke-width="0.9" fill="#000">I</text><text transform="translate(301.8,1334) scale(2.05,1)" font-family="Liberation Sans" font-size="73" stroke="#000" stroke-width="0.9" fill="#000">m</text><text transform="translate(429.5,1334) scale(1.66,1)" font-family="Liberation Sans" font-size="73" stroke="#000" stroke-width="0.9" fill="#000">a</text><text transform="translate(509.5,1334) scale(1.98,1)" font-family="Liberation Sans" font-size="73" stroke="#000" stroke-width="0.9" fill="#000">g</text><text transform="translate(592.9,1334) scale(1.96,1)" font-family="Liberation Sans" font-size="73" stroke="#000" stroke-width="0.9" fill="#000">e</text></svg><svg style="position:absolute;left:353px;top:1496px;overflow:visible" width="16" height="2" viewBox="0 0 16 2"><circle cx="1.0" cy="1" r=".55" fill="#9a9a9a"/><circle cx="3.7" cy="1" r=".55" fill="#9a9a9a"/><circle cx="6.4" cy="1" r=".55" fill="#9a9a9a"/><circle cx="9.1" cy="1" r=".55" fill="#9a9a9a"/><circle cx="11.8" cy="1" r=".55" fill="#9a9a9a"/><circle cx="14.5" cy="1" r=".55" fill="#9a9a9a"/></svg><div style="left:0px;top:1501.2px;width:722px;height:21.399999999999864px;background:#b8b8b8;"></div><svg style="position:absolute;left:1px;top:1503.2px" width="18" height="18" viewBox="0 0 18 18"><circle cx="9" cy="9.5" r="7" fill="#fff" stroke="#333" stroke-width="1.6"/><path d="M9 5v4.6h3.4" fill="none" stroke="#333" stroke-width="1.4"/></svg><div class="t" style="left:23px;top:1503.7px;font-size:15px;line-height:18.0px;color:#111;font-weight:400;">AutowareDateTimePanel</div><div style="left:703px;top:1503.4px;width:17px;height:17px;background:#fbfbfb;border:1px solid #8a8a8a;border-radius:3px;box-sizing:border-box;"></div><svg style="position:absolute;left:706px;top:1506.4px" width="11" height="11" viewBox="0 0 11 11"><circle cx="5.5" cy="5.5" r="5.2" fill="#c8102e"/><path d="M3.4 3.4L7.6 7.6M7.6 3.4L3.4 7.6" stroke="#fff" stroke-width="1.3"/></svg><div class="t" style="left:6.3px;top:1538.7px;font-size:15px;line-height:18.0px;color:#111;font-weight:400;">ROS Time:</div><div style="left:82.2px;top:1534.6px;width:273.3px;height:23.7px;background:#fff;border:1px solid #a9a9a9;border-radius:3px;box-sizing:border-box;"></div><div class="t" style="left:85.6px;top:1538.7px;font-size:15px;line-height:18.0px;color:#111;font-weight:400;">2023-01-17 17:19:33.494</div><div class="t" style="left:362.3px;top:1538.7px;font-size:15px;line-height:18.0px;color:#111;font-weight:400;">Wall Time:</div><div style="left:439.4px;top:1534.6px;width:273.3px;height:23.7px;background:#fff;border:1px solid #a9a9a9;border-radius:3px;box-sizing:border-box;"></div><div class="t" style="left:442.8px;top:1538.7px;font-size:15px;line-height:18.0px;color:#111;font-weight:400;">2023-01-17 17:19:33.494</div><div style="left:0px;top:1573.4px;width:51.4px;height:22.799999999999955px;background:linear-gradient(#fcfcfc,#ececec);border:1px solid #b9b9b9;border-radius:3px;box-sizing:border-box;"></div><div class="t" style="left:0px;width:51.4px;text-align:center;top:1576.6px;font-size:15px;line-height:18.0px;color:#1c1c1c;font-weight:400;">Reset</div><svg style="position:absolute;left:725px;top:826px;overflow:visible" width="2" height="17" viewBox="0 0 2 17"><circle cx="1" cy="1.0" r=".55" fill="#9a9a9a"/><circle cx="1" cy="4.0" r=".55" fill="#9a9a9a"/><circle cx="1" cy="7.0" r=".55" fill="#9a9a9a"/><circle cx="1" cy="10.0" r=".55" fill="#9a9a9a"/><circle cx="1" cy="13.0" r=".55" fill="#9a9a9a"/><circle cx="1" cy="16.0" r=".55" fill="#9a9a9a"/></svg><svg style="position:absolute;left:734px;top:829px;overflow:visible" width="5" height="8" viewBox="0 0 5 8"><path d="M4.5.3v7.4L.3 4z" fill="#555"/></svg><svg style="position:absolute;left:2800px;top:829px;overflow:visible" width="5" height="8" viewBox="0 0 5 8"><path d="M.5.3v7.4L4.7 4z" fill="#555"/></svg><div class="t" style="left:2744.7px;top:1573.8px;font-size:15px;line-height:18.0px;color:#111;font-weight:400;">31 fps</div><svg style="position:absolute;left:2795px;top:1585px;overflow:visible" width="13" height="13" viewBox="0 0 13 13"><circle cx="11" cy="2" r=".6" fill="#aaa"/><circle cx="11" cy="6" r=".6" fill="#aaa"/><circle cx="7" cy="6" r=".6" fill="#aaa"/><circle cx="11" cy="10" r=".6" fill="#aaa"/><circle cx="7" cy="10" r=".6" fill="#aaa"/><circle cx="3" cy="10" r=".6" fill="#aaa"/></svg>
</body></html>
